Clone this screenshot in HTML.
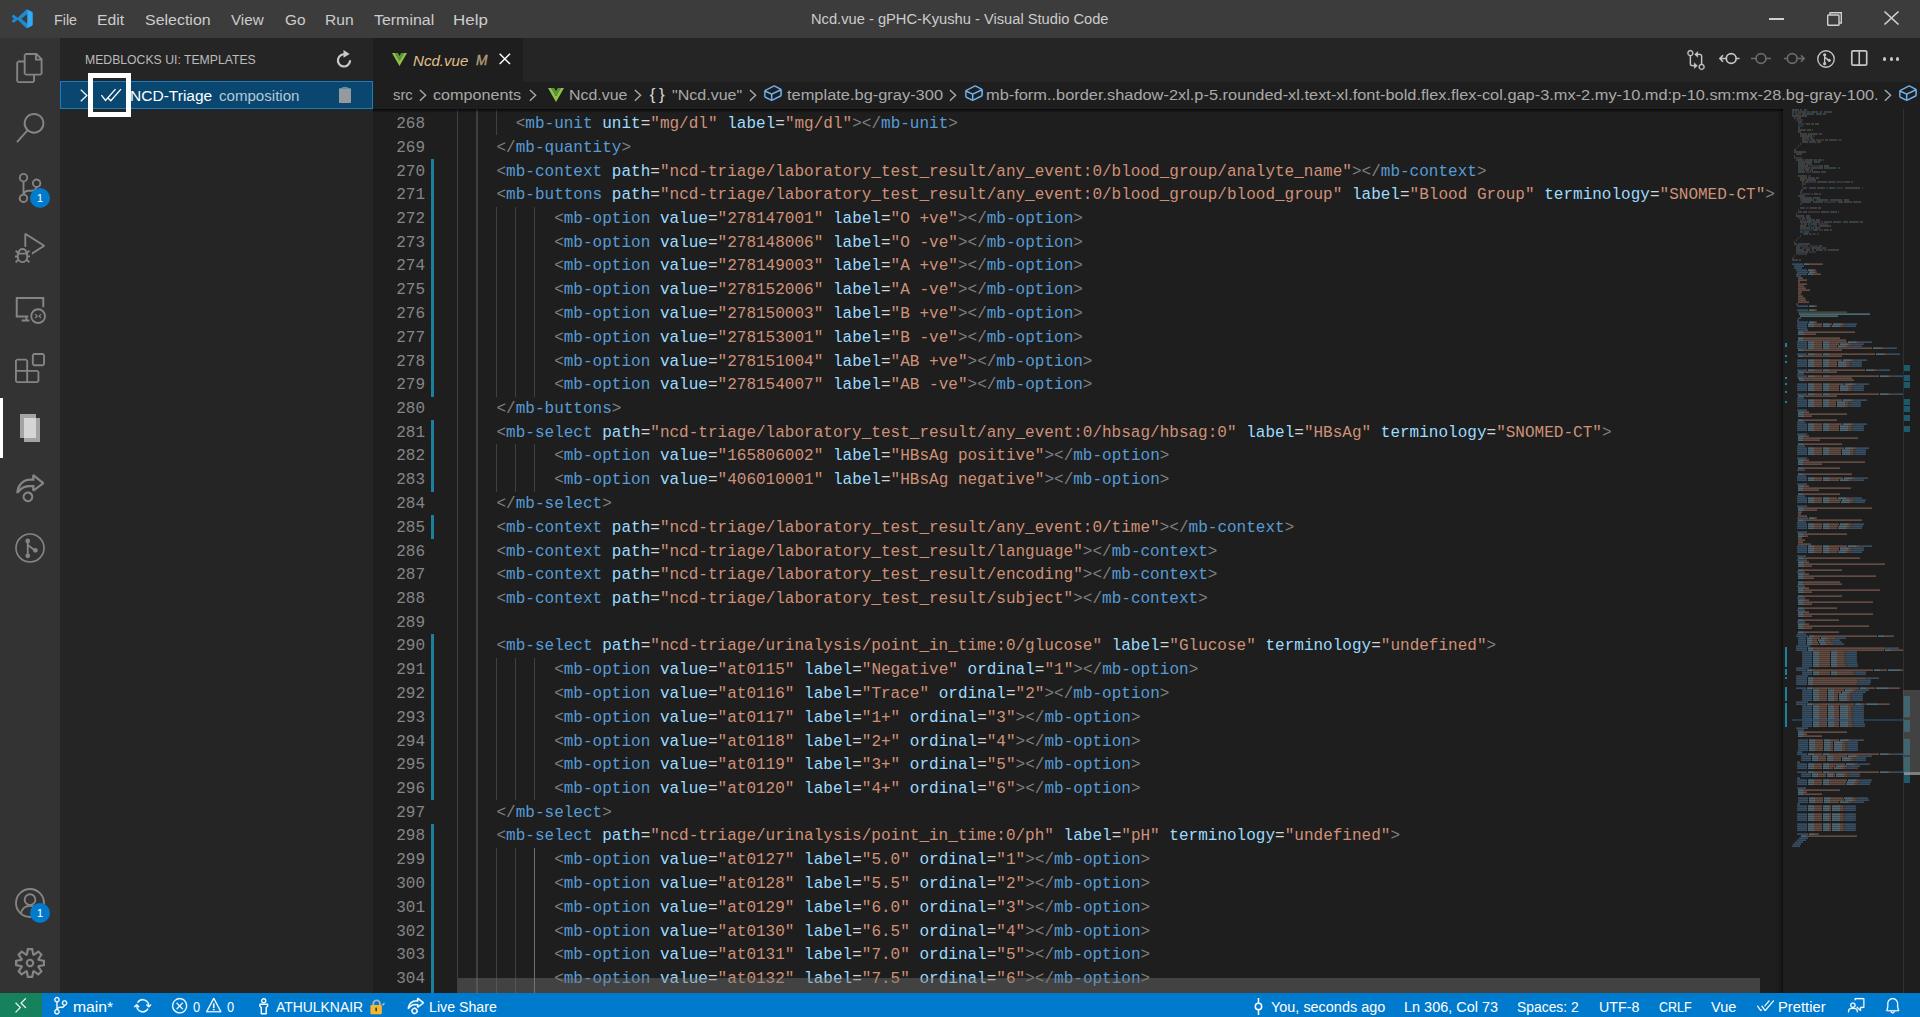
<!DOCTYPE html><html><head><meta charset="utf-8"><title>Ncd.vue - gPHC-Kyushu - Visual Studio Code</title><style>
*{box-sizing:border-box}
html,body{margin:0;padding:0}
html{width:1920px;height:1017px;overflow:hidden}
body{width:1920px;height:1017px;overflow:hidden;background:#1e1e1e;position:relative;font-family:"Liberation Sans",sans-serif;color:#ccc;-webkit-font-smoothing:antialiased}
#title{position:absolute;left:0;top:0;width:1920px;height:38px;background:#3c3c3c}
#act{position:absolute;left:0;top:38px;width:60px;height:955px;background:#333}
#side{position:absolute;left:60px;top:38px;width:313px;height:955px;background:#252526}
#tabs{position:absolute;left:373px;top:38px;width:1547px;height:43.75px;background:#252526}
#tab{position:absolute;left:0;top:0;width:150px;height:43.75px;background:#1e1e1e}
#crumbs{position:absolute;left:373px;top:81.75px;width:1547px;height:27.5px;background:#1e1e1e}
#ed{position:absolute;left:373px;top:109.25px;width:1547px;height:883.25px;background:#1e1e1e;overflow:hidden}
#status{position:absolute;left:0;top:992.5px;width:1920px;height:24.5px;background:#007acc;overflow:hidden}
#remote{position:absolute;left:0;top:0;width:42px;height:24.5px;background:#16825d}
.tx{position:absolute;white-space:pre;line-height:1;transform-origin:0 50%}
.ln,.cl{position:absolute;height:23.75px;line-height:26px;transform:scaleY(1.04);transform-origin:0 17px;font-family:"Liberation Mono",monospace;font-size:16.03px;white-space:pre}
.ln{left:0;width:52px;text-align:right;color:#858585}
.cl{left:85px;color:#d4d4d4}
.p{color:#808080}.t{color:#569cd6}.a{color:#9cdcfe}.s{color:#ce9178}.e{color:#d4d4d4}
.ig{position:absolute;width:1.25px;background:#404040}
.iga{background:#707070}
.gm{position:absolute;left:58px;width:3px;background:#1b809c}
.row{position:absolute;left:0;top:42.5px;width:313px;height:28.75px;background:#094771;outline:1px solid #1f7bbd;outline-offset:-1px}
.box{position:absolute;left:88px;top:73px;width:43px;height:44px;border:5px solid #fff}
svg{position:absolute;overflow:visible}
</style></head><body>
<div id="title"><svg style="left:11.80px;top:8.20px" width="20.60" height="21.60" viewBox="0 0 100 100" preserveAspectRatio="none"><path d="M74.900 7.600 96 17.700c2.400 1.200 4 3.600 4 6.300v52c0 2.700-1.600 5.100-4 6.300L74.900 92.400c-2.600 1.300-5.800.7-7.800-1.300L27.400 54.500 10.200 67.600c-1.600 1.200-3.800 1.100-5.300-.2L.9 63.700c-1.600-1.500-1.600-4 0-5.500L9.900 50 .9 41.800c-1.600-1.500-1.600-4 0-5.500l4-3.700c1.500-1.300 3.700-1.400 5.300-.2l17.200 13.100L67.100 8.900c2-2 5.200-2.600 7.800-1.300zM75 27.300 45 50l30 22.700V27.300z" fill="#1f8ad2"/><path d="M74.900 7.600 96 17.700c2.400 1.200 4 3.600 4 6.300v52c0 2.700-1.600 5.100-4 6.300L74.900 92.400c-1.500.7-3.200.8-4.900.3 2.600-.4 5-2.500 5-5.700V13c0-3.200-2.400-5.300-5-5.700 1.700-.5 3.400-.4 4.900.3z" fill="#35a9f4"/></svg>
<div style="position:absolute;left:1769px;top:18px;width:15px;height:1.6px;background:#d0d0d0"></div>
<svg style="left:1827.00px;top:11.50px" width="15.00" height="14.00" viewBox="0 0 15 14" ><rect x=".700" y="3" width="11.300" height="10.300" rx=".600" fill="none" stroke="#d0d0d0" stroke-width="1.400"/><path d="M3 2.800V.700h11.300v10.300H12.200" fill="none" stroke="#d0d0d0" stroke-width="1.400"/></svg>
<svg style="left:1884.00px;top:11.00px" width="15.00" height="14.00" viewBox="0 0 15 14" ><path d="M.5.500l14 13M14.500.500l-14 13" stroke="#d0d0d0" stroke-width="1.700" fill="none"/></svg></div>
<div id="act"><svg style="left:15.00px;top:15.00px" width="30.00" height="30.00" viewBox="0 0 24 24" ><path d="M17.5 0h-9L7 1.5V6H2.5L1 7.5v15.07L2.5 24h12.07L16 22.57V18h4.7l1.3-1.43V4.5L17.5 0zm0 2.12l2.38 2.38H17.5V2.12zm-3 20.38h-12v-15H7v9.07L8.5 18h6v4.5zm6-6h-12v-15H16V6h4.5v10.5z" fill="#858585" /></svg>
<svg style="left:15.00px;top:75.00px" width="30.00" height="30.00" viewBox="0 0 24 24" ><path d="M15.25 0a8.25 8.25 0 0 0-6.18 13.72L1 22.88l1.12 1 8.05-9.12A8.251 8.251 0 1 0 15.25.01V0zm0 15a6.75 6.75 0 1 1 0-13.5 6.75 6.75 0 0 1 0 13.5z" fill="#858585" /></svg>
<svg style="left:15.00px;top:135.00px" width="30.00" height="30.00" viewBox="0 0 24 24" ><path d="M21.007 8.222A3.738 3.738 0 0 0 15.045 5.2a3.737 3.737 0 0 0 1.156 6.583 2.988 2.988 0 0 1-2.668 1.67h-2.99a4.456 4.456 0 0 0-2.989 1.165V7.4a3.737 3.737 0 1 0-1.494 0v9.117a3.776 3.776 0 1 0 1.816.099 2.99 2.99 0 0 1 2.668-1.667h2.99a4.484 4.484 0 0 0 4.223-3.039 3.736 3.736 0 0 0 3.25-3.687zM4.565 3.738a2.242 2.242 0 1 1 4.484 0 2.242 2.242 0 0 1-4.484 0zm4.484 16.441a2.242 2.242 0 1 1-4.484 0 2.242 2.242 0 0 1 4.484 0zm8.221-9.715a2.242 2.242 0 1 1 0-4.485 2.242 2.242 0 0 1 0 4.485z" fill="#858585" /></svg>
<div style="position:absolute;left:30.0px;top:150.0px;width:20.0px;height:20.0px;border-radius:50%;background:#007acc;color:#fff;font-size:11.5px;text-align:center;line-height:20.0px">1</div>
<svg style="left:15.00px;top:195.00px" width="30.00" height="30.00" viewBox="0 0 24 24" ><path d="M10.94 13.5l-1.32 1.32a3.73 3.73 0 0 0-7.24 0L1.06 13.5 0 14.56l1.72 1.72-.22.22V18H0v1.5h1.5v.08c.077.489.214.966.41 1.42L0 22.94 1.06 24l1.65-1.65A4.308 4.308 0 0 0 6 24a4.31 4.31 0 0 0 3.29-1.65L10.94 24 12 22.94 10.09 21c.198-.464.336-.951.41-1.45v-.1H12V18h-1.500v-1.500l-.220-.220L12 14.560l-1.060-1.060zM6 13.500a2.250 2.250 0 0 1 2.250 2.250h-4.500A2.250 2.250 0 0 1 6 13.500zm3 6a3.330 3.330 0 0 1-3 3 3.330 3.330 0 0 1-3-3v-2.250h6v2.250zm14.760-9.900v1.260L13.500 17.370V15.600l8.500-5.370L9 2v9.460a5.070 5.070 0 0 0-1.500-.720V.630L8.640 0l15.120 9.600z" fill="#858585" /></svg>
<svg style="left:15.00px;top:256.00px" width="30.00" height="30.00" viewBox="0 0 24 24" ><path d="M22.6 10.6V3.1H1.4v14.8h9.2M5.3 21.1h6.2M9.1 18v3" fill="none" stroke="#858585" stroke-width="1.6"/><circle cx="18.5" cy="17.7" r="5.5" fill="#333" stroke="#858585" stroke-width="1.5"/><path d="M16.2 16.2l1.5 1.5-1.5 1.5M20.800 16.200l-1.500 1.500 1.500 1.500" fill="none" stroke="#858585" stroke-width="1"/></svg>
<svg style="left:15.00px;top:315.00px" width="30.00" height="30.00" viewBox="0 0 24 24" ><path d="M13.5 1.5L15 0h7.5L24 1.5V9l-1.500 1.500H15L13.500 9V1.500zm1.500 0V9h7.500V1.500H15zM0 15V6l1.500-1.500H9L10.500 6v7.500H18l1.500 1.500v7.500L18 24H1.500L0 22.500V15zm9-1.500V6H1.500v7.500H9zM9 15H1.500v7.500H9V15zm1.500 7.500H18V15h-7.500v7.500z" fill="#858585" /></svg>
<div style="position:absolute;left:0;top:360px;width:2.5px;height:60px;background:#fff"></div>
<div style="position:absolute;left:20px;top:375.6px;width:16.3px;height:24.4px;background:rgba(255,255,255,.55)"></div>
<div style="position:absolute;left:23.9px;top:379.7px;width:16.2px;height:24.5px;background:rgba(255,255,255,.55)"></div>
<svg style="left:15.00px;top:435.00px" width="30.00" height="30.00" viewBox="0 0 24 24" ><path d="M13.735 1.694L15.178 1l8.029 6.328v1.388l-8.029 6.072-1.443-.694v-2.776h-.59c-4.06-.02-6.71.104-10.61 5.163l-1.534-.493a8.23 8.23 0 0 1 .271-2.255 11.026 11.026 0 0 1 3.92-6.793 11.339 11.339 0 0 1 7.502-2.547h1.040v-2.700zm1.804 7.917v2.776l5.676-4.281-5.648-4.545v2.664h-2.860A9.299 9.299 0 0 0 5.770 8.848a10.444 10.444 0 0 0-2.401 4.122c3.351-3.213 6.190-3.359 9.798-3.359h2.372zm-7.647 5.896a4.310 4.310 0 1 1 4.788 7.166 4.310 4.310 0 0 1-4.788-7.166zm.955 5.728a2.588 2.588 0 1 0 2.878-4.302 2.588 2.588 0 0 0-2.878 4.302z" fill="#858585" /></svg>
<svg style="left:15.00px;top:495.00px" width="30.00" height="30.00" viewBox="0 0 24 24" ><circle cx="12" cy="12" r="11.200" fill="none" stroke="#858585" stroke-width="1.300"/><path d="M10.200 6.500V18M10.200 9.500l5.500 4.300" fill="none" stroke="#858585" stroke-width="1.500"/><circle cx="10.200" cy="6.300" r="1.900" fill="#858585"/><circle cx="10.200" cy="18.200" r="1.900" fill="#858585"/><circle cx="16.300" cy="13.800" r="1.900" fill="#858585"/></svg>
<svg style="left:15.00px;top:850.00px" width="30.00" height="30.00" viewBox="0 0 24 24" ><circle cx="12" cy="12" r="11.200" fill="none" stroke="#858585" stroke-width="1.500"/><circle cx="12" cy="9.300" r="4.300" fill="none" stroke="#858585" stroke-width="1.500"/><path d="M4.800 20.500c.700-4 3.600-6.200 7.200-6.200s6.500 2.200 7.200 6.200" fill="none" stroke="#858585" stroke-width="1.500"/></svg>
<div style="position:absolute;left:30.0px;top:865.0px;width:20.0px;height:20.0px;border-radius:50%;background:#007acc;color:#fff;font-size:11.5px;text-align:center;line-height:20.0px">1</div>
<svg style="left:15.00px;top:910.00px" width="30.00" height="30.00" viewBox="0 0 24 24" ><path d="M19.85 8.75l4.15.83v4.84l-4.15.83 2.35 3.52-3.43 3.43-3.52-2.35-.83 4.15H9.58l-.83-4.15-3.52 2.35-3.43-3.43 2.35-3.52L0 14.42V9.58l4.15-.83L1.8 5.23 5.23 1.8l3.52 2.35L9.58 0h4.84l.83 4.15 3.52-2.35 3.43 3.43-2.35 3.52zm-1.57 5.07l4-.81v-2l-4-.81-.54-1.3 2.290-3.430-1.430-1.430-3.430 2.290-1.300-.540-.810-4h-2l-.810 4-1.300.540-3.430-2.290-1.430 1.430L6.380 8.900l-.540 1.300-4 .810v2l4 .810.540 1.300-2.290 3.430 1.430 1.430 3.430-2.290 1.300.540.810 4h2l.810-4 1.300-.540 3.430 2.290 1.430-1.430-2.290-3.430.540-1.300zm-8.186-4.672A3.430 3.430 0 0 1 12 8.570 3.440 3.440 0 0 1 15.430 12a3.430 3.430 0 1 1-5.336-2.852zm.956 4.274c.281.188.612.288.950.288A1.700 1.700 0 0 0 13.710 12a1.710 1.710 0 1 0-2.660 1.422z" fill="#858585" /></svg></div>
<div id="side"><div class="row"></div><svg style="left:275.50px;top:12.00px" width="16.00" height="19.00" viewBox="0 0 16 19" ><path d="M10.2 4.700A6.100 6.100 0 1 0 14.100 10.300" fill="none" stroke="#c8c8c8" stroke-width="2.200"/><path d="M7.500 0l6.200 3.900-6.200 3.800z" fill="#c8c8c8"/></svg>
<svg style="left:20.30px;top:50.60px" width="8.00" height="13.00" viewBox="0 0 8 13" ><path d="M.800.800l6 5.700-6 5.700" fill="none" stroke="#f0f0f0" stroke-width="1.400"/></svg>
<svg style="left:40.00px;top:50.00px" width="22.00" height="14.00" viewBox="0 0 22 14" ><path d="M1.400 7.200l4.100 5.300L15.500 1.100M8.200 10.200l2.600 2.600L21 1.100" fill="none" stroke="#fff" stroke-width="1.300"/></svg>
<svg style="left:279.00px;top:49.20px" width="12.00" height="16.00" viewBox="0 0 12 16" ><path d="M3.500 0h5v1.300h2.500c.600 0 1 .400 1 1v12.700c0 .600-.400 1-1 1H1c-.600 0-1-.400-1-1V2.300c0-.600.400-1 1-1h2.500z" fill="#959a9e"/><rect x="4" y=".300" width="4" height="1.700" rx=".500" fill="#3f8fd0"/></svg></div>
<div id="tabs"><div id="tab"></div><svg style="left:18.50px;top:14.50px" width="15.00" height="13.12" viewBox="0 0 16 14" ><path d="M0 0h3.300L8 8.200 12.700 0H16L8 14z" fill="#8dc149"/><path d="M3.300 0h2.900L8 3.200 9.800 0h2.900L8 8.200z" fill="#5e9a36"/></svg>
<svg style="left:126.00px;top:15.30px" width="11.70" height="11.70" viewBox="0 0 12 12" ><path d="M.700.700l10.600 10.600M11.300.700L.700 11.300" stroke="#fff" stroke-width="1.500" fill="none"/></svg>
<svg style="left:1313.25px;top:11.50px" width="20.00" height="20.00" viewBox="0 0 16 16" ><path d="M9.500 4H11a1 1 0 0 1 1 1v6.050a2.500 2.500 0 1 0 1 0V5a2 2 0 0 0-2-2H9.500V1L6.750 3.500 9.500 6V4zM12.500 15a1.500 1.500 0 1 1 0-3 1.500 1.500 0 0 1 0 3zM6.500 12H5a1 1 0 0 1-1-1V4.950a2.500 2.500 0 1 0-1 0V11a2 2 0 0 0 2 2h1.500v2l2.750-2.500L6.500 10v2zM3.500 1a1.500 1.500 0 1 1 0 3 1.500 1.500 0 0 1 0-3z" fill="#c5c5c5" fill-rule="evenodd" stroke="#c5c5c5" stroke-width="0.15"/></svg>
<svg style="left:1345.50px;top:14.00px" width="21.00" height="13.00" viewBox="0 0 21 13" ><circle cx="12.200" cy="6.500" r="4.900" fill="none" stroke="#c5c5c5" stroke-width="1.700"/><path d="M17 6.500h3.500M7.300 6.500H1M4 3.300L.900 6.500 4 9.700" fill="none" stroke="#c5c5c5" stroke-width="1.600"/></svg>
<svg style="left:1378.00px;top:14.00px" width="20.00" height="13.00" viewBox="0 0 20 13" ><circle cx="10" cy="6.500" r="4.900" fill="none" stroke="#6b6b6b" stroke-width="1.700"/><path d="M0 6.500h5.100M14.900 6.500H20" fill="none" stroke="#6b6b6b" stroke-width="1.600"/></svg>
<svg style="left:1411.00px;top:14.00px" width="21.00" height="13.00" viewBox="0 0 21 13" ><circle cx="8.200" cy="6.500" r="4.900" fill="none" stroke="#6b6b6b" stroke-width="1.700"/><path d="M0 6.500h3.300M13.100 6.500H20M17 3.300l3.100 3.200L17 9.700" fill="none" stroke="#6b6b6b" stroke-width="1.600"/></svg>
<svg style="left:1444.00px;top:12.00px" width="18.00" height="18.00" viewBox="0 0 24 24" ><circle cx="12" cy="12" r="11" fill="none" stroke="#c5c5c5" stroke-width="1.800"/><path d="M10.200 6.500V18M10.200 9.500l5.500 4.300" fill="none" stroke="#c5c5c5" stroke-width="1.800"/><circle cx="10.200" cy="6.300" r="2.100" fill="#c5c5c5"/><circle cx="10.200" cy="18.200" r="2.100" fill="#c5c5c5"/><circle cx="16.300" cy="13.800" r="2.100" fill="#c5c5c5"/></svg>
<svg style="left:1478.30px;top:12.30px" width="16.50" height="16.00" viewBox="0 0 16.500 16" ><rect x=".800" y=".800" width="14.900" height="14.400" rx="1.200" fill="none" stroke="#c5c5c5" stroke-width="1.700"/><path d="M8.250.700v14.600" stroke="#c5c5c5" stroke-width="1.600"/></svg>
<div style="position:absolute;left:1510.2px;top:19.4px;width:3.2px;height:3.2px;border-radius:50%;background:#c5c5c5"></div>
<div style="position:absolute;left:1516.7px;top:19.4px;width:3.2px;height:3.2px;border-radius:50%;background:#c5c5c5"></div>
<div style="position:absolute;left:1523.3px;top:19.4px;width:3.2px;height:3.2px;border-radius:50%;background:#c5c5c5"></div></div>
<div id="crumbs"><svg style="left:45.60px;top:7.00px" width="8.00" height="12.60" viewBox="0 0 8 12.6" ><path d="M.900.900l5.700 5.400-5.700 5.400" fill="none" stroke="#a9a9a9" stroke-width="1.400"/></svg>
<svg style="left:155.60px;top:7.00px" width="8.00" height="12.60" viewBox="0 0 8 12.6" ><path d="M.900.900l5.700 5.400-5.700 5.400" fill="none" stroke="#a9a9a9" stroke-width="1.400"/></svg>
<svg style="left:260.50px;top:7.00px" width="8.00" height="12.60" viewBox="0 0 8 12.6" ><path d="M.900.900l5.700 5.400-5.700 5.400" fill="none" stroke="#a9a9a9" stroke-width="1.400"/></svg>
<svg style="left:375.50px;top:7.00px" width="8.00" height="12.60" viewBox="0 0 8 12.6" ><path d="M.900.900l5.700 5.400-5.700 5.400" fill="none" stroke="#a9a9a9" stroke-width="1.400"/></svg>
<svg style="left:576.20px;top:7.00px" width="8.00" height="12.60" viewBox="0 0 8 12.6" ><path d="M.900.900l5.700 5.400-5.700 5.400" fill="none" stroke="#a9a9a9" stroke-width="1.400"/></svg>
<svg style="left:1511.00px;top:7.00px" width="8.00" height="12.60" viewBox="0 0 8 12.6" ><path d="M.900.900l5.700 5.400-5.700 5.400" fill="none" stroke="#a9a9a9" stroke-width="1.400"/></svg>
<svg style="left:175.00px;top:6.50px" width="16.00" height="14.00" viewBox="0 0 16 14" ><path d="M0 0h3.300L8 8.200 12.700 0H16L8 14z" fill="#8dc149"/><path d="M3.300 0h2.900L8 3.200 9.800 0h2.900L8 8.200z" fill="#5e9a36"/></svg>
<span class="tx" style="left:276.8px;top:3.800px;font-size:17px;color:#d4d4d4;letter-spacing:3.5px">{}</span>
<svg style="left:389.65px;top:1.45px" width="20.00" height="20.00" viewBox="0 0 16 16" ><path d="M14.45 4.500l-5-2.500h-.900l-7 3.500-.550.890v4.500l.550.900 5 2.500h.900l7-3.500.550-.900v-4.500l-.550-.890zm-8 8.640l-4.500-2.250V7.170l4.500 2v3.970zm.500-4.800L2.290 6.230l6.660-3.340 4.670 2.340-6.670 3.110zm7 1.550l-6.500 3.250V9.210l6.500-3v3.680z" fill="#75beff" stroke="#75beff" stroke-width=".15"/></svg>
<svg style="left:590.75px;top:1.45px" width="20.00" height="20.00" viewBox="0 0 16 16" ><path d="M14.45 4.500l-5-2.500h-.900l-7 3.500-.550.890v4.500l.550.900 5 2.500h.900l7-3.500.550-.900v-4.500l-.550-.890zm-8 8.640l-4.500-2.250V7.170l4.500 2v3.970zm.500-4.800L2.290 6.230l6.660-3.340 4.670 2.340-6.670 3.110zm7 1.550l-6.500 3.250V9.210l6.500-3v3.680z" fill="#75beff" stroke="#75beff" stroke-width=".15"/></svg>
<svg style="left:1525.05px;top:1.45px" width="20.00" height="20.00" viewBox="0 0 16 16" ><path d="M14.45 4.500l-5-2.500h-.900l-7 3.500-.550.890v4.500l.550.900 5 2.500h.900l7-3.500.550-.900v-4.500l-.550-.890zm-8 8.640l-4.500-2.250V7.170l4.500 2v3.970zm.500-4.800L2.290 6.230l6.660-3.340 4.670 2.340-6.670 3.110zm7 1.550l-6.500 3.250V9.210l6.500-3v3.680z" fill="#75beff" stroke="#75beff" stroke-width=".15"/></svg></div>
<div id="ed">
<div class="ig" style="left:84.2px;top:0.00px;height:928.50px"></div>
<div class="ig" style="left:103.4px;top:0.00px;height:928.50px"></div>
<div class="ig" style="left:122.7px;top:0.00px;height:26.00px"></div>
<div class="ig" style="left:122.7px;top:97.25px;height:190.00px"></div>
<div class="ig" style="left:141.9px;top:97.25px;height:190.00px"></div>
<div class="ig" style="left:161.2px;top:97.25px;height:190.00px"></div>
<div class="ig" style="left:122.7px;top:334.75px;height:47.50px"></div>
<div class="ig" style="left:141.9px;top:334.75px;height:47.50px"></div>
<div class="ig" style="left:161.2px;top:334.75px;height:47.50px"></div>
<div class="ig" style="left:122.7px;top:548.50px;height:142.50px"></div>
<div class="ig" style="left:141.9px;top:548.50px;height:142.50px"></div>
<div class="ig" style="left:161.2px;top:548.50px;height:142.50px"></div>
<div class="ig" style="left:122.7px;top:738.50px;height:190.00px"></div>
<div class="ig" style="left:141.9px;top:738.50px;height:190.00px"></div>
<div class="ig iga" style="left:161.2px;top:738.50px;height:190.00px"></div>
<div class="gm" style="top:49.75px;height:237.50px"></div>
<div class="gm" style="top:311.00px;height:71.25px"></div>
<div class="gm" style="top:406.00px;height:23.75px"></div>
<div class="gm" style="top:524.75px;height:166.25px"></div>
<div class="gm" style="top:714.75px;height:213.75px"></div>
<div class="ln" style="top:2.00px">268</div><div class="cl" style="top:2.00px">      <span class="p">&lt;</span><span class="t">mb-unit</span> <span class="a">unit</span><span class="e">=</span><span class="s">"mg/dl"</span> <span class="a">label</span><span class="e">=</span><span class="s">"mg/dl"</span><span class="p">&gt;</span><span class="p">&lt;/</span><span class="t">mb-unit</span><span class="p">&gt;</span></div>
<div class="ln" style="top:26.00px">269</div><div class="cl" style="top:26.00px">    <span class="p">&lt;/</span><span class="t">mb-quantity</span><span class="p">&gt;</span></div>
<div class="ln" style="top:50.00px">270</div><div class="cl" style="top:50.00px">    <span class="p">&lt;</span><span class="t">mb-context</span> <span class="a">path</span><span class="e">=</span><span class="s">"ncd-triage/laboratory_test_result/any_event:0/blood_group/analyte_name"</span><span class="p">&gt;</span><span class="p">&lt;/</span><span class="t">mb-context</span><span class="p">&gt;</span></div>
<div class="ln" style="top:73.00px">271</div><div class="cl" style="top:73.00px">    <span class="p">&lt;</span><span class="t">mb-buttons</span> <span class="a">path</span><span class="e">=</span><span class="s">"ncd-triage/laboratory_test_result/any_event:0/blood_group/blood_group"</span> <span class="a">label</span><span class="e">=</span><span class="s">"Blood Group"</span> <span class="a">terminology</span><span class="e">=</span><span class="s">"SNOMED-CT"</span><span class="p">&gt;</span></div>
<div class="ln" style="top:97.00px">272</div><div class="cl" style="top:97.00px">          <span class="p">&lt;</span><span class="t">mb-option</span> <span class="a">value</span><span class="e">=</span><span class="s">"278147001"</span> <span class="a">label</span><span class="e">=</span><span class="s">"O +ve"</span><span class="p">&gt;</span><span class="p">&lt;/</span><span class="t">mb-option</span><span class="p">&gt;</span></div>
<div class="ln" style="top:121.00px">273</div><div class="cl" style="top:121.00px">          <span class="p">&lt;</span><span class="t">mb-option</span> <span class="a">value</span><span class="e">=</span><span class="s">"278148006"</span> <span class="a">label</span><span class="e">=</span><span class="s">"O -ve"</span><span class="p">&gt;</span><span class="p">&lt;/</span><span class="t">mb-option</span><span class="p">&gt;</span></div>
<div class="ln" style="top:144.00px">274</div><div class="cl" style="top:144.00px">          <span class="p">&lt;</span><span class="t">mb-option</span> <span class="a">value</span><span class="e">=</span><span class="s">"278149003"</span> <span class="a">label</span><span class="e">=</span><span class="s">"A +ve"</span><span class="p">&gt;</span><span class="p">&lt;/</span><span class="t">mb-option</span><span class="p">&gt;</span></div>
<div class="ln" style="top:168.00px">275</div><div class="cl" style="top:168.00px">          <span class="p">&lt;</span><span class="t">mb-option</span> <span class="a">value</span><span class="e">=</span><span class="s">"278152006"</span> <span class="a">label</span><span class="e">=</span><span class="s">"A -ve"</span><span class="p">&gt;</span><span class="p">&lt;/</span><span class="t">mb-option</span><span class="p">&gt;</span></div>
<div class="ln" style="top:192.00px">276</div><div class="cl" style="top:192.00px">          <span class="p">&lt;</span><span class="t">mb-option</span> <span class="a">value</span><span class="e">=</span><span class="s">"278150003"</span> <span class="a">label</span><span class="e">=</span><span class="s">"B +ve"</span><span class="p">&gt;</span><span class="p">&lt;/</span><span class="t">mb-option</span><span class="p">&gt;</span></div>
<div class="ln" style="top:216.00px">277</div><div class="cl" style="top:216.00px">          <span class="p">&lt;</span><span class="t">mb-option</span> <span class="a">value</span><span class="e">=</span><span class="s">"278153001"</span> <span class="a">label</span><span class="e">=</span><span class="s">"B -ve"</span><span class="p">&gt;</span><span class="p">&lt;/</span><span class="t">mb-option</span><span class="p">&gt;</span></div>
<div class="ln" style="top:240.00px">278</div><div class="cl" style="top:240.00px">          <span class="p">&lt;</span><span class="t">mb-option</span> <span class="a">value</span><span class="e">=</span><span class="s">"278151004"</span> <span class="a">label</span><span class="e">=</span><span class="s">"AB +ve"</span><span class="p">&gt;</span><span class="p">&lt;/</span><span class="t">mb-option</span><span class="p">&gt;</span></div>
<div class="ln" style="top:263.00px">279</div><div class="cl" style="top:263.00px">          <span class="p">&lt;</span><span class="t">mb-option</span> <span class="a">value</span><span class="e">=</span><span class="s">"278154007"</span> <span class="a">label</span><span class="e">=</span><span class="s">"AB -ve"</span><span class="p">&gt;</span><span class="p">&lt;/</span><span class="t">mb-option</span><span class="p">&gt;</span></div>
<div class="ln" style="top:287.00px">280</div><div class="cl" style="top:287.00px">    <span class="p">&lt;/</span><span class="t">mb-buttons</span><span class="p">&gt;</span></div>
<div class="ln" style="top:311.00px">281</div><div class="cl" style="top:311.00px">    <span class="p">&lt;</span><span class="t">mb-select</span> <span class="a">path</span><span class="e">=</span><span class="s">"ncd-triage/laboratory_test_result/any_event:0/hbsag/hbsag:0"</span> <span class="a">label</span><span class="e">=</span><span class="s">"HBsAg"</span> <span class="a">terminology</span><span class="e">=</span><span class="s">"SNOMED-CT"</span><span class="p">&gt;</span></div>
<div class="ln" style="top:334.00px">282</div><div class="cl" style="top:334.00px">          <span class="p">&lt;</span><span class="t">mb-option</span> <span class="a">value</span><span class="e">=</span><span class="s">"165806002"</span> <span class="a">label</span><span class="e">=</span><span class="s">"HBsAg positive"</span><span class="p">&gt;</span><span class="p">&lt;/</span><span class="t">mb-option</span><span class="p">&gt;</span></div>
<div class="ln" style="top:358.00px">283</div><div class="cl" style="top:358.00px">          <span class="p">&lt;</span><span class="t">mb-option</span> <span class="a">value</span><span class="e">=</span><span class="s">"406010001"</span> <span class="a">label</span><span class="e">=</span><span class="s">"HBsAg negative"</span><span class="p">&gt;</span><span class="p">&lt;/</span><span class="t">mb-option</span><span class="p">&gt;</span></div>
<div class="ln" style="top:382.00px">284</div><div class="cl" style="top:382.00px">    <span class="p">&lt;/</span><span class="t">mb-select</span><span class="p">&gt;</span></div>
<div class="ln" style="top:406.00px">285</div><div class="cl" style="top:406.00px">    <span class="p">&lt;</span><span class="t">mb-context</span> <span class="a">path</span><span class="e">=</span><span class="s">"ncd-triage/laboratory_test_result/any_event:0/time"</span><span class="p">&gt;</span><span class="p">&lt;/</span><span class="t">mb-context</span><span class="p">&gt;</span></div>
<div class="ln" style="top:430.00px">286</div><div class="cl" style="top:430.00px">    <span class="p">&lt;</span><span class="t">mb-context</span> <span class="a">path</span><span class="e">=</span><span class="s">"ncd-triage/laboratory_test_result/language"</span><span class="p">&gt;</span><span class="p">&lt;/</span><span class="t">mb-context</span><span class="p">&gt;</span></div>
<div class="ln" style="top:453.00px">287</div><div class="cl" style="top:453.00px">    <span class="p">&lt;</span><span class="t">mb-context</span> <span class="a">path</span><span class="e">=</span><span class="s">"ncd-triage/laboratory_test_result/encoding"</span><span class="p">&gt;</span><span class="p">&lt;/</span><span class="t">mb-context</span><span class="p">&gt;</span></div>
<div class="ln" style="top:477.00px">288</div><div class="cl" style="top:477.00px">    <span class="p">&lt;</span><span class="t">mb-context</span> <span class="a">path</span><span class="e">=</span><span class="s">"ncd-triage/laboratory_test_result/subject"</span><span class="p">&gt;</span><span class="p">&lt;/</span><span class="t">mb-context</span><span class="p">&gt;</span></div>
<div class="ln" style="top:501.00px">289</div><div class="cl" style="top:501.00px"></div>
<div class="ln" style="top:524.00px">290</div><div class="cl" style="top:524.00px">    <span class="p">&lt;</span><span class="t">mb-select</span> <span class="a">path</span><span class="e">=</span><span class="s">"ncd-triage/urinalysis/point_in_time:0/glucose"</span> <span class="a">label</span><span class="e">=</span><span class="s">"Glucose"</span> <span class="a">terminology</span><span class="e">=</span><span class="s">"undefined"</span><span class="p">&gt;</span></div>
<div class="ln" style="top:548.00px">291</div><div class="cl" style="top:548.00px">          <span class="p">&lt;</span><span class="t">mb-option</span> <span class="a">value</span><span class="e">=</span><span class="s">"at0115"</span> <span class="a">label</span><span class="e">=</span><span class="s">"Negative"</span> <span class="a">ordinal</span><span class="e">=</span><span class="s">"1"</span><span class="p">&gt;</span><span class="p">&lt;/</span><span class="t">mb-option</span><span class="p">&gt;</span></div>
<div class="ln" style="top:572.00px">292</div><div class="cl" style="top:572.00px">          <span class="p">&lt;</span><span class="t">mb-option</span> <span class="a">value</span><span class="e">=</span><span class="s">"at0116"</span> <span class="a">label</span><span class="e">=</span><span class="s">"Trace"</span> <span class="a">ordinal</span><span class="e">=</span><span class="s">"2"</span><span class="p">&gt;</span><span class="p">&lt;/</span><span class="t">mb-option</span><span class="p">&gt;</span></div>
<div class="ln" style="top:596.00px">293</div><div class="cl" style="top:596.00px">          <span class="p">&lt;</span><span class="t">mb-option</span> <span class="a">value</span><span class="e">=</span><span class="s">"at0117"</span> <span class="a">label</span><span class="e">=</span><span class="s">"1+"</span> <span class="a">ordinal</span><span class="e">=</span><span class="s">"3"</span><span class="p">&gt;</span><span class="p">&lt;/</span><span class="t">mb-option</span><span class="p">&gt;</span></div>
<div class="ln" style="top:620.00px">294</div><div class="cl" style="top:620.00px">          <span class="p">&lt;</span><span class="t">mb-option</span> <span class="a">value</span><span class="e">=</span><span class="s">"at0118"</span> <span class="a">label</span><span class="e">=</span><span class="s">"2+"</span> <span class="a">ordinal</span><span class="e">=</span><span class="s">"4"</span><span class="p">&gt;</span><span class="p">&lt;/</span><span class="t">mb-option</span><span class="p">&gt;</span></div>
<div class="ln" style="top:643.00px">295</div><div class="cl" style="top:643.00px">          <span class="p">&lt;</span><span class="t">mb-option</span> <span class="a">value</span><span class="e">=</span><span class="s">"at0119"</span> <span class="a">label</span><span class="e">=</span><span class="s">"3+"</span> <span class="a">ordinal</span><span class="e">=</span><span class="s">"5"</span><span class="p">&gt;</span><span class="p">&lt;/</span><span class="t">mb-option</span><span class="p">&gt;</span></div>
<div class="ln" style="top:667.00px">296</div><div class="cl" style="top:667.00px">          <span class="p">&lt;</span><span class="t">mb-option</span> <span class="a">value</span><span class="e">=</span><span class="s">"at0120"</span> <span class="a">label</span><span class="e">=</span><span class="s">"4+"</span> <span class="a">ordinal</span><span class="e">=</span><span class="s">"6"</span><span class="p">&gt;</span><span class="p">&lt;/</span><span class="t">mb-option</span><span class="p">&gt;</span></div>
<div class="ln" style="top:691.00px">297</div><div class="cl" style="top:691.00px">    <span class="p">&lt;/</span><span class="t">mb-select</span><span class="p">&gt;</span></div>
<div class="ln" style="top:714.00px">298</div><div class="cl" style="top:714.00px">    <span class="p">&lt;</span><span class="t">mb-select</span> <span class="a">path</span><span class="e">=</span><span class="s">"ncd-triage/urinalysis/point_in_time:0/ph"</span> <span class="a">label</span><span class="e">=</span><span class="s">"pH"</span> <span class="a">terminology</span><span class="e">=</span><span class="s">"undefined"</span><span class="p">&gt;</span></div>
<div class="ln" style="top:738.00px">299</div><div class="cl" style="top:738.00px">          <span class="p">&lt;</span><span class="t">mb-option</span> <span class="a">value</span><span class="e">=</span><span class="s">"at0127"</span> <span class="a">label</span><span class="e">=</span><span class="s">"5.0"</span> <span class="a">ordinal</span><span class="e">=</span><span class="s">"1"</span><span class="p">&gt;</span><span class="p">&lt;/</span><span class="t">mb-option</span><span class="p">&gt;</span></div>
<div class="ln" style="top:762.00px">300</div><div class="cl" style="top:762.00px">          <span class="p">&lt;</span><span class="t">mb-option</span> <span class="a">value</span><span class="e">=</span><span class="s">"at0128"</span> <span class="a">label</span><span class="e">=</span><span class="s">"5.5"</span> <span class="a">ordinal</span><span class="e">=</span><span class="s">"2"</span><span class="p">&gt;</span><span class="p">&lt;/</span><span class="t">mb-option</span><span class="p">&gt;</span></div>
<div class="ln" style="top:786.00px">301</div><div class="cl" style="top:786.00px">          <span class="p">&lt;</span><span class="t">mb-option</span> <span class="a">value</span><span class="e">=</span><span class="s">"at0129"</span> <span class="a">label</span><span class="e">=</span><span class="s">"6.0"</span> <span class="a">ordinal</span><span class="e">=</span><span class="s">"3"</span><span class="p">&gt;</span><span class="p">&lt;/</span><span class="t">mb-option</span><span class="p">&gt;</span></div>
<div class="ln" style="top:810.00px">302</div><div class="cl" style="top:810.00px">          <span class="p">&lt;</span><span class="t">mb-option</span> <span class="a">value</span><span class="e">=</span><span class="s">"at0130"</span> <span class="a">label</span><span class="e">=</span><span class="s">"6.5"</span> <span class="a">ordinal</span><span class="e">=</span><span class="s">"4"</span><span class="p">&gt;</span><span class="p">&lt;/</span><span class="t">mb-option</span><span class="p">&gt;</span></div>
<div class="ln" style="top:833.00px">303</div><div class="cl" style="top:833.00px">          <span class="p">&lt;</span><span class="t">mb-option</span> <span class="a">value</span><span class="e">=</span><span class="s">"at0131"</span> <span class="a">label</span><span class="e">=</span><span class="s">"7.0"</span> <span class="a">ordinal</span><span class="e">=</span><span class="s">"5"</span><span class="p">&gt;</span><span class="p">&lt;/</span><span class="t">mb-option</span><span class="p">&gt;</span></div>
<div class="ln" style="top:857.00px">304</div><div class="cl" style="top:857.00px">          <span class="p">&lt;</span><span class="t">mb-option</span> <span class="a">value</span><span class="e">=</span><span class="s">"at0132"</span> <span class="a">label</span><span class="e">=</span><span class="s">"7.5"</span> <span class="a">ordinal</span><span class="e">=</span><span class="s">"6"</span><span class="p">&gt;</span><span class="p">&lt;/</span><span class="t">mb-option</span><span class="p">&gt;</span></div>
<div class="ln" style="top:881.00px">305</div><div class="cl" style="top:881.00px">          <span class="p">&lt;</span><span class="t">mb-option</span> <span class="a">value</span><span class="e">=</span><span class="s">"at0133"</span> <span class="a">label</span><span class="e">=</span><span class="s">"8.0"</span> <span class="a">ordinal</span><span class="e">=</span><span class="s">"7"</span><span class="p">&gt;</span><span class="p">&lt;/</span><span class="t">mb-option</span><span class="p">&gt;</span></div>
<div style="position:absolute;left:1403px;top:0;width:7px;height:884px;background:linear-gradient(90deg,rgba(0,0,0,0),rgba(0,0,0,.18) 60%,rgba(0,0,0,.55))"></div>
<svg style="left:1418.5px;top:0" width="115" height="884" viewBox="0 0 115 884" opacity=".52">
<path d="M0.0 155h1.0M30.0 155h1.0M2.0 157h1.0M2.0 159h1.0M4.0 161h1.0M23.0 161h1.0M5.0 163h1.0M24.0 163h1.0M4.0 165h1.0M28.0 165h1.0M4.0 167h1.0M4.0 195h1.0M5.0 197h1.0M24.0 197h1.0M5.0 201h1.0M24.0 201h1.0M6.0 209h1.0M5.0 211h1.0M5.0 213h1.0M24.0 213h1.0M5.0 215h1.0M52.0 215h1.0M53.0 215h2.0M64.0 215h1.0M5.0 217h1.0M51.0 217h1.0M52.0 217h2.0M63.0 217h1.0M5.0 219h1.0M6.0 221h1.0M5.0 233h1.0M67.0 233h1.0M68.0 233h2.0M79.0 233h1.0M5.0 235h1.0M59.0 235h1.0M60.0 235h2.0M71.0 235h1.0M5.0 237h1.0M57.0 237h1.0M58.0 237h2.0M69.0 237h1.0M5.0 239h1.0M92.0 239h1.0M93.0 239h2.0M104.0 239h1.0M5.0 245h1.0M95.0 245h1.0M96.0 245h2.0M107.0 245h1.0M5.0 251h1.0M62.0 251h1.0M63.0 251h2.0M74.0 251h1.0M5.0 253h1.0M57.0 253h1.0M58.0 253h2.0M69.0 253h1.0M5.0 255h1.0M57.0 255h1.0M58.0 255h2.0M69.0 255h1.0M5.0 257h1.0M57.0 257h1.0M58.0 257h2.0M69.0 257h1.0M5.0 261h1.0M85.0 261h1.0M86.0 261h2.0M97.0 261h1.0M5.0 265h1.0M5.0 267h1.0M99.0 267h1.0M100.0 267h2.0M111.0 267h0.5M5.0 275h1.0M64.0 275h1.0M65.0 275h2.0M76.0 275h1.0M5.0 277h1.0M59.0 277h1.0M60.0 277h2.0M71.0 277h1.0M5.0 279h1.0M59.0 279h1.0M60.0 279h2.0M71.0 279h1.0M5.0 281h1.0M59.0 281h1.0M60.0 281h2.0M71.0 281h1.0M5.0 285h1.0M99.0 285h1.0M100.0 285h2.0M111.0 285h0.5M5.0 289h1.0M5.0 291h1.0M62.0 291h1.0M63.0 291h2.0M74.0 291h1.0M5.0 293h1.0M56.0 293h1.0M57.0 293h2.0M68.0 293h1.0M5.0 295h1.0M56.0 295h1.0M57.0 295h2.0M68.0 295h1.0M5.0 297h1.0M56.0 297h1.0M57.0 297h2.0M68.0 297h1.0M5.0 301h1.0M5.0 313h1.0M5.0 315h1.0M62.0 315h1.0M63.0 315h2.0M74.0 315h1.0M5.0 317h1.0M59.0 317h1.0M60.0 317h2.0M71.0 317h1.0M5.0 319h1.0M59.0 319h1.0M60.0 319h2.0M71.0 319h1.0M5.0 321h1.0M59.0 321h1.0M60.0 321h2.0M71.0 321h1.0M5.0 325h1.0M5.0 337h1.0M5.0 339h1.0M64.0 339h1.0M65.0 339h2.0M76.0 339h1.0M5.0 341h1.0M61.0 341h1.0M62.0 341h2.0M73.0 341h1.0M5.0 343h1.0M61.0 343h1.0M62.0 343h2.0M73.0 343h1.0M5.0 345h1.0M61.0 345h1.0M62.0 345h2.0M73.0 345h1.0M5.0 349h1.0M5.0 361h1.0M5.0 367h1.0M5.0 369h1.0M63.0 369h1.0M64.0 369h2.0M75.0 369h1.0M5.0 371h1.0M59.0 371h1.0M60.0 371h2.0M71.0 371h1.0M5.0 375h1.0M5.0 387h1.0M5.0 389h1.0M57.0 389h1.0M58.0 389h2.0M69.0 389h1.0M5.0 391h1.0M61.0 391h1.0M62.0 391h2.0M73.0 391h1.0M5.0 393h1.0M60.0 393h1.0M61.0 393h2.0M72.0 393h1.0M5.0 397h1.0M5.0 409h1.0M24.0 409h1.0M5.0 413h1.0M5.0 415h1.0M59.0 415h1.0M60.0 415h2.0M71.0 415h1.0M5.0 417h1.0M58.0 417h1.0M59.0 417h2.0M70.0 417h1.0M5.0 419h1.0M57.0 419h1.0M58.0 419h2.0M69.0 419h1.0M5.0 423h1.0M5.0 437h1.0M67.0 437h1.0M68.0 437h2.0M79.0 437h1.0M5.0 439h1.0M59.0 439h1.0M60.0 439h2.0M71.0 439h1.0M5.0 441h1.0M59.0 441h1.0M60.0 441h2.0M71.0 441h1.0M5.0 443h1.0M57.0 443h1.0M58.0 443h2.0M69.0 443h1.0M5.0 447h1.0M5.0 451h1.0M5.0 463h1.0M5.0 477h1.0M5.0 489h1.0M5.0 501h1.0M5.0 513h1.0M5.0 525h1.0M4.0 527h1.0M101.0 527h1.0M6.0 529h1.0M43.0 529h1.0M44.0 529h2.0M53.0 529h1.0M6.0 531h1.0M37.0 531h1.0M38.0 531h2.0M47.0 531h1.0M6.0 533h1.0M39.0 533h1.0M40.0 533h2.0M49.0 533h1.0M6.0 535h1.0M41.0 535h1.0M42.0 535h2.0M51.0 535h1.0M4.0 537h2.0M17.0 537h1.0M4.0 539h1.0M93.0 539h1.0M94.0 539h2.0M106.0 539h1.0M4.0 541h1.0M111.0 541h0.5M10.0 543h1.0M52.0 543h1.0M53.0 543h2.0M64.0 543h1.0M10.0 545h1.0M52.0 545h1.0M53.0 545h2.0M64.0 545h1.0M10.0 547h1.0M52.0 547h1.0M53.0 547h2.0M64.0 547h1.0M10.0 549h1.0M52.0 549h1.0M53.0 549h2.0M64.0 549h1.0M10.0 551h1.0M52.0 551h1.0M53.0 551h2.0M64.0 551h1.0M10.0 553h1.0M52.0 553h1.0M53.0 553h2.0M64.0 553h1.0M10.0 555h1.0M53.0 555h1.0M54.0 555h2.0M65.0 555h1.0M10.0 557h1.0M53.0 557h1.0M54.0 557h2.0M65.0 557h1.0M4.0 559h2.0M16.0 559h1.0M4.0 561h1.0M111.0 561h0.5M10.0 563h1.0M61.0 563h1.0M62.0 563h2.0M73.0 563h1.0M10.0 565h1.0M61.0 565h1.0M62.0 565h2.0M73.0 565h1.0M4.0 567h2.0M15.0 567h1.0M4.0 569h1.0M73.0 569h1.0M74.0 569h2.0M86.0 569h1.0M4.0 571h1.0M65.0 571h1.0M66.0 571h2.0M78.0 571h1.0M4.0 573h1.0M65.0 573h1.0M66.0 573h2.0M78.0 573h1.0M4.0 575h1.0M64.0 575h1.0M65.0 575h2.0M77.0 575h1.0M4.0 579h1.0M107.0 579h1.0M10.0 581h1.0M64.0 581h1.0M65.0 581h2.0M76.0 581h1.0M10.0 583h1.0M61.0 583h1.0M62.0 583h2.0M73.0 583h1.0M10.0 585h1.0M58.0 585h1.0M59.0 585h2.0M70.0 585h1.0M10.0 587h1.0M58.0 587h1.0M59.0 587h2.0M70.0 587h1.0M10.0 589h1.0M58.0 589h1.0M59.0 589h2.0M70.0 589h1.0M10.0 591h1.0M58.0 591h1.0M59.0 591h2.0M70.0 591h1.0M4.0 593h2.0M15.0 593h1.0M4.0 595h1.0M97.0 595h1.0M10.0 597h1.0M59.0 597h1.0M60.0 597h2.0M71.0 597h1.0M10.0 599h1.0M59.0 599h1.0M60.0 599h2.0M71.0 599h1.0M10.0 601h1.0M59.0 601h1.0M60.0 601h2.0M71.0 601h1.0M10.0 603h1.0M59.0 603h1.0M60.0 603h2.0M71.0 603h1.0M10.0 605h1.0M59.0 605h1.0M60.0 605h2.0M71.0 605h1.0M10.0 607h1.0M59.0 607h1.0M60.0 607h2.0M71.0 607h1.0M10.0 609h1.0M59.0 609h1.0M60.0 609h2.0M71.0 609h1.0M10.0 611h1.0M59.0 611h1.0M60.0 611h2.0M71.0 611h1.0M10.0 613h1.0M59.0 613h1.0M60.0 613h2.0M71.0 613h1.0M10.0 615h1.0M60.0 615h1.0M61.0 615h2.0M72.0 615h1.0M10.0 617h1.0M60.0 617h1.0M61.0 617h2.0M72.0 617h1.0M4.0 619h2.0M15.0 619h1.0M5.0 621h1.0M6.0 631h1.0M59.0 631h1.0M60.0 631h2.0M71.0 631h1.0M6.0 633h1.0M53.0 633h1.0M54.0 633h2.0M65.0 633h1.0M6.0 635h1.0M53.0 635h1.0M54.0 635h2.0M65.0 635h1.0M6.0 637h1.0M53.0 637h1.0M54.0 637h2.0M65.0 637h1.0M6.0 639h1.0M53.0 639h1.0M54.0 639h2.0M65.0 639h1.0M6.0 641h1.0M53.0 641h1.0M54.0 641h2.0M65.0 641h1.0M5.0 643h1.0M5.0 645h1.0M99.0 645h1.0M100.0 645h2.0M111.0 645h0.5M9.0 647h1.0M67.0 647h1.0M68.0 647h2.0M79.0 647h1.0M9.0 649h1.0M61.0 649h1.0M62.0 649h2.0M73.0 649h1.0M9.0 651h1.0M61.0 651h1.0M62.0 651h2.0M73.0 651h1.0M5.0 653h1.0M5.0 655h1.0M65.0 655h1.0M66.0 655h2.0M77.0 655h1.0M5.0 657h1.0M55.0 657h1.0M56.0 657h2.0M67.0 657h1.0M5.0 659h1.0M53.0 659h1.0M54.0 659h2.0M65.0 659h1.0M5.0 663h1.0M99.0 663h1.0M100.0 663h2.0M111.0 663h0.5M9.0 665h1.0M55.0 665h1.0M56.0 665h2.0M67.0 665h1.0M9.0 667h1.0M55.0 667h1.0M56.0 667h2.0M67.0 667h1.0M5.0 669h1.0M5.0 671h1.0M67.0 671h1.0M68.0 671h2.0M79.0 671h1.0M5.0 673h1.0M66.0 673h1.0M67.0 673h2.0M78.0 673h1.0M5.0 675h1.0M65.0 675h1.0M66.0 675h2.0M77.0 675h1.0M5.0 679h1.0M6.0 689h1.0M63.0 689h1.0M64.0 689h2.0M75.0 689h1.0M6.0 691h1.0M64.0 691h1.0M65.0 691h2.0M76.0 691h1.0M6.0 693h1.0M59.0 693h1.0M60.0 693h2.0M71.0 693h1.0M5.0 695h1.0M5.0 697h1.0M51.0 697h1.0M52.0 697h2.0M63.0 697h1.0M5.0 699h1.0M51.0 699h1.0M52.0 699h2.0M63.0 699h1.0M5.0 701h1.0M51.0 701h1.0M52.0 701h2.0M63.0 701h1.0M5.0 705h1.0M51.0 705h1.0M52.0 705h2.0M63.0 705h1.0M5.0 707h1.0M51.0 707h1.0M52.0 707h2.0M63.0 707h1.0M5.0 709h1.0M51.0 709h1.0M52.0 709h2.0M63.0 709h1.0M5.0 711h1.0M51.0 711h1.0M52.0 711h2.0M63.0 711h1.0M5.0 715h1.0M51.0 715h1.0M52.0 715h2.0M63.0 715h1.0M5.0 717h1.0M51.0 717h1.0M52.0 717h2.0M63.0 717h1.0M5.0 719h1.0M51.0 719h1.0M52.0 719h2.0M63.0 719h1.0M5.0 721h1.0M51.0 721h1.0M52.0 721h2.0M63.0 721h1.0M5.0 725h1.0M26.0 725h1.0M7.0 729h1.0M5.0 731h1.0M3.0 733h1.0M1.0 735h1.0M0.0 737h1.0" stroke="#808080" stroke-width="1.25" fill="none"/>
<path d="M1.0 155h10.0M3.0 157h9.0M3.0 159h7.0M5.0 161h10.0M6.0 163h10.0M5.0 165h10.0M5.0 167h4.0M5.0 195h1.0M6.0 197h10.0M6.0 201h10.0M7.0 209h2.0M6.0 211h1.0M6.0 213h10.0M6.0 215h9.0M55.0 215h9.0M6.0 217h9.0M54.0 217h9.0M6.0 219h9.0M7.0 221h9.0M6.0 233h9.0M70.0 233h9.0M6.0 235h9.0M62.0 235h9.0M6.0 237h9.0M60.0 237h9.0M6.0 239h9.0M95.0 239h9.0M6.0 245h9.0M98.0 245h9.0M6.0 251h9.0M65.0 251h9.0M6.0 253h9.0M60.0 253h9.0M6.0 255h9.0M60.0 255h9.0M6.0 257h9.0M60.0 257h9.0M6.0 261h9.0M88.0 261h9.0M6.0 265h6.0M6.0 267h9.0M102.0 267h9.0M6.0 275h9.0M67.0 275h9.0M6.0 277h9.0M62.0 277h9.0M6.0 279h9.0M62.0 279h9.0M6.0 281h9.0M62.0 281h9.0M6.0 285h9.0M102.0 285h9.0M6.0 289h6.0M6.0 291h9.0M65.0 291h9.0M6.0 293h9.0M59.0 293h9.0M6.0 295h9.0M59.0 295h9.0M6.0 297h9.0M59.0 297h9.0M6.0 301h9.0M6.0 313h7.0M6.0 315h9.0M65.0 315h9.0M6.0 317h9.0M62.0 317h9.0M6.0 319h9.0M62.0 319h9.0M6.0 321h9.0M62.0 321h9.0M6.0 325h9.0M6.0 337h7.0M6.0 339h9.0M67.0 339h9.0M6.0 341h9.0M64.0 341h9.0M6.0 343h9.0M64.0 343h9.0M6.0 345h9.0M64.0 345h9.0M6.0 349h9.0M6.0 361h7.0M6.0 367h8.0M6.0 369h9.0M66.0 369h9.0M6.0 371h9.0M62.0 371h9.0M6.0 375h9.0M6.0 387h7.0M6.0 389h9.0M60.0 389h9.0M6.0 391h9.0M64.0 391h9.0M6.0 393h9.0M63.0 393h9.0M6.0 397h9.0M6.0 409h10.0M6.0 413h8.0M6.0 415h9.0M62.0 415h9.0M6.0 417h9.0M61.0 417h9.0M6.0 419h9.0M60.0 419h9.0M6.0 423h9.0M6.0 437h9.0M70.0 437h9.0M6.0 439h9.0M62.0 439h9.0M6.0 441h9.0M62.0 441h9.0M6.0 443h9.0M60.0 443h9.0M6.0 447h8.0M6.0 451h9.0M6.0 463h7.0M6.0 477h7.0M6.0 489h7.0M6.0 501h7.0M6.0 513h7.0M6.0 525h8.0M5.0 527h11.0M7.0 529h7.0M46.0 529h7.0M7.0 531h7.0M40.0 531h7.0M7.0 533h7.0M42.0 533h7.0M7.0 535h7.0M44.0 535h7.0M6.0 537h11.0M5.0 539h10.0M96.0 539h10.0M5.0 541h10.0M11.0 543h9.0M55.0 543h9.0M11.0 545h9.0M55.0 545h9.0M11.0 547h9.0M55.0 547h9.0M11.0 549h9.0M55.0 549h9.0M11.0 551h9.0M55.0 551h9.0M11.0 553h9.0M55.0 553h9.0M11.0 555h9.0M56.0 555h9.0M11.0 557h9.0M56.0 557h9.0M6.0 559h10.0M5.0 561h9.0M11.0 563h9.0M64.0 563h9.0M11.0 565h9.0M64.0 565h9.0M6.0 567h9.0M5.0 569h10.0M76.0 569h10.0M5.0 571h10.0M68.0 571h10.0M5.0 573h10.0M68.0 573h10.0M5.0 575h10.0M67.0 575h10.0M5.0 579h9.0M11.0 581h9.0M67.0 581h9.0M11.0 583h9.0M64.0 583h9.0M11.0 585h9.0M61.0 585h9.0M11.0 587h9.0M61.0 587h9.0M11.0 589h9.0M61.0 589h9.0M11.0 591h9.0M61.0 591h9.0M6.0 593h9.0M5.0 595h9.0M11.0 597h9.0M62.0 597h9.0M11.0 599h9.0M62.0 599h9.0M11.0 601h9.0M62.0 601h9.0M11.0 603h9.0M62.0 603h9.0M11.0 605h9.0M62.0 605h9.0M11.0 607h9.0M62.0 607h9.0M11.0 609h9.0M62.0 609h9.0M11.0 611h9.0M62.0 611h9.0M11.0 613h9.0M62.0 613h9.0M11.0 615h9.0M63.0 615h9.0M11.0 617h9.0M63.0 617h9.0M6.0 619h9.0M6.0 621h6.0M7.0 631h9.0M62.0 631h9.0M7.0 633h9.0M56.0 633h9.0M7.0 635h9.0M56.0 635h9.0M7.0 637h9.0M56.0 637h9.0M7.0 639h9.0M56.0 639h9.0M7.0 641h9.0M56.0 641h9.0M6.0 643h4.0M6.0 645h9.0M102.0 645h9.0M10.0 647h9.0M70.0 647h9.0M10.0 649h9.0M64.0 649h9.0M10.0 651h9.0M64.0 651h9.0M6.0 653h2.0M6.0 655h9.0M68.0 655h9.0M6.0 657h9.0M58.0 657h9.0M6.0 659h9.0M56.0 659h9.0M6.0 663h9.0M102.0 663h9.0M10.0 665h9.0M58.0 665h9.0M10.0 667h9.0M58.0 667h9.0M6.0 669h2.0M6.0 671h9.0M70.0 671h9.0M6.0 673h9.0M69.0 673h9.0M6.0 675h9.0M68.0 675h9.0M6.0 679h8.0M7.0 689h9.0M66.0 689h9.0M7.0 691h9.0M67.0 691h9.0M7.0 693h9.0M62.0 693h9.0M6.0 695h2.0M6.0 697h9.0M54.0 697h9.0M6.0 699h9.0M54.0 699h9.0M6.0 701h9.0M54.0 701h9.0M6.0 705h9.0M54.0 705h9.0M6.0 707h9.0M54.0 707h9.0M6.0 709h9.0M54.0 709h9.0M6.0 711h9.0M54.0 711h9.0M6.0 715h9.0M54.0 715h9.0M6.0 717h9.0M54.0 717h9.0M6.0 719h9.0M54.0 719h9.0M6.0 721h9.0M54.0 721h9.0M6.0 725h10.0M8.0 729h8.0M6.0 731h8.0M4.0 733h7.0M2.0 735h7.0M1.0 737h7.0" stroke="#569cd6" stroke-width="1.25" fill="none"/>
<path d="M12.0 155h4.0M16.0 161h4.0M17.0 163h4.0M16.0 165h4.0M17.0 197h4.0M17.0 201h4.0M7.0 205h71.0M8.0 207h38.0M17.0 213h4.0M16.0 215h5.0M31.0 215h5.0M41.0 215h7.0M16.0 217h5.0M31.0 217h5.0M40.0 217h7.0M6.0 223h4.0M6.0 225h5.0M6.0 229h4.0M6.0 231h4.0M16.0 233h5.0M31.0 233h5.0M56.0 233h7.0M16.0 235h5.0M31.0 235h5.0M48.0 235h7.0M16.0 237h5.0M31.0 237h5.0M46.0 237h7.0M16.0 239h5.0M31.0 239h5.0M81.0 239h7.0M6.0 241h4.0M16.0 245h5.0M31.0 245h5.0M84.0 245h7.0M6.0 247h4.0M16.0 251h5.0M31.0 251h5.0M51.0 251h7.0M16.0 253h5.0M31.0 253h5.0M46.0 253h7.0M16.0 255h5.0M31.0 255h5.0M46.0 255h7.0M16.0 257h5.0M31.0 257h5.0M46.0 257h7.0M16.0 261h5.0M31.0 261h5.0M74.0 261h7.0M6.0 263h4.0M16.0 267h5.0M31.0 267h5.0M88.0 267h7.0M6.0 269h4.0M7.0 271h4.0M16.0 275h5.0M31.0 275h5.0M53.0 275h7.0M16.0 277h5.0M31.0 277h5.0M48.0 277h7.0M16.0 279h5.0M31.0 279h5.0M48.0 279h7.0M16.0 281h5.0M31.0 281h5.0M48.0 281h7.0M16.0 285h5.0M31.0 285h5.0M88.0 285h7.0M6.0 287h4.0M16.0 291h5.0M31.0 291h5.0M51.0 291h7.0M16.0 293h5.0M31.0 293h5.0M45.0 293h7.0M16.0 295h5.0M31.0 295h5.0M45.0 295h7.0M16.0 297h5.0M31.0 297h5.0M45.0 297h7.0M6.0 303h5.0M6.0 305h4.0M6.0 307h5.0M6.0 311h4.0M16.0 315h5.0M31.0 315h5.0M51.0 315h7.0M16.0 317h5.0M31.0 317h5.0M48.0 317h7.0M16.0 319h5.0M31.0 319h5.0M48.0 319h7.0M16.0 321h5.0M31.0 321h5.0M48.0 321h7.0M6.0 327h5.0M6.0 329h4.0M6.0 331h4.0M6.0 335h4.0M16.0 339h5.0M31.0 339h5.0M53.0 339h7.0M16.0 341h5.0M31.0 341h5.0M50.0 341h7.0M16.0 343h5.0M31.0 343h5.0M50.0 343h7.0M16.0 345h5.0M31.0 345h5.0M50.0 345h7.0M6.0 351h5.0M6.0 353h4.0M6.0 355h4.0M6.0 359h4.0M6.0 365h4.0M16.0 369h5.0M31.0 369h5.0M52.0 369h7.0M16.0 371h5.0M31.0 371h5.0M48.0 371h7.0M6.0 377h5.0M6.0 379h4.0M6.0 381h4.0M6.0 385h4.0M16.0 389h5.0M31.0 389h5.0M46.0 389h7.0M16.0 391h5.0M31.0 391h5.0M50.0 391h7.0M16.0 393h5.0M31.0 393h5.0M49.0 393h7.0M6.0 399h4.0M6.0 401h5.0M17.0 409h4.0M6.0 411h4.0M16.0 415h5.0M31.0 415h5.0M48.0 415h7.0M16.0 417h5.0M31.0 417h5.0M47.0 417h7.0M16.0 419h5.0M31.0 419h5.0M46.0 419h7.0M6.0 425h4.0M6.0 427h5.0M16.0 437h5.0M31.0 437h5.0M56.0 437h7.0M16.0 439h5.0M31.0 439h5.0M48.0 439h7.0M16.0 441h5.0M31.0 441h5.0M48.0 441h7.0M16.0 443h5.0M31.0 443h5.0M46.0 443h7.0M6.0 449h4.0M6.0 453h5.0M6.0 455h4.0M6.0 457h5.0M6.0 461h4.0M6.0 465h5.0M6.0 467h4.0M6.0 469h5.0M6.0 473h4.0M6.0 475h4.0M6.0 479h5.0M6.0 481h4.0M6.0 483h5.0M6.0 487h4.0M6.0 491h5.0M6.0 493h4.0M6.0 495h5.0M6.0 499h4.0M6.0 503h5.0M6.0 505h4.0M6.0 507h5.0M6.0 511h4.0M6.0 515h5.0M6.0 517h4.0M6.0 519h5.0M6.0 523h4.0M17.0 527h4.0M86.0 527h5.0M15.0 529h4.0M29.0 529h5.0M15.0 531h4.0M26.0 531h5.0M15.0 533h4.0M27.0 533h5.0M15.0 535h4.0M28.0 535h5.0M16.0 539h4.0M16.0 541h4.0M93.0 541h5.0M111.0 541h0.5M21.0 543h5.0M39.0 543h5.0M21.0 545h5.0M39.0 545h5.0M21.0 547h5.0M39.0 547h5.0M21.0 549h5.0M39.0 549h5.0M21.0 551h5.0M39.0 551h5.0M21.0 553h5.0M39.0 553h5.0M21.0 555h5.0M39.0 555h5.0M21.0 557h5.0M39.0 557h5.0M15.0 561h4.0M82.0 561h5.0M96.0 561h11.0M21.0 563h5.0M39.0 563h5.0M21.0 565h5.0M39.0 565h5.0M16.0 569h4.0M16.0 571h4.0M16.0 573h4.0M16.0 575h4.0M15.0 579h4.0M68.0 579h5.0M84.0 579h11.0M21.0 581h5.0M36.0 581h5.0M53.0 581h7.0M21.0 583h5.0M36.0 583h5.0M50.0 583h7.0M21.0 585h5.0M36.0 585h5.0M47.0 585h7.0M21.0 587h5.0M36.0 587h5.0M47.0 587h7.0M21.0 589h5.0M36.0 589h5.0M47.0 589h7.0M21.0 591h5.0M36.0 591h5.0M47.0 591h7.0M15.0 595h4.0M63.0 595h5.0M74.0 595h11.0M21.0 597h5.0M36.0 597h5.0M48.0 597h7.0M21.0 599h5.0M36.0 599h5.0M48.0 599h7.0M21.0 601h5.0M36.0 601h5.0M48.0 601h7.0M21.0 603h5.0M36.0 603h5.0M48.0 603h7.0M21.0 605h5.0M36.0 605h5.0M48.0 605h7.0M21.0 607h5.0M36.0 607h5.0M48.0 607h7.0M21.0 609h5.0M36.0 609h5.0M48.0 609h7.0M21.0 611h5.0M36.0 611h5.0M48.0 611h7.0M21.0 613h5.0M36.0 613h5.0M48.0 613h7.0M21.0 615h5.0M36.0 615h5.0M48.0 615h7.0M21.0 617h5.0M36.0 617h5.0M48.0 617h7.0M6.0 623h4.0M6.0 625h5.0M6.0 627h4.0M17.0 631h5.0M32.0 631h5.0M48.0 631h7.0M17.0 633h5.0M32.0 633h5.0M42.0 633h7.0M17.0 635h5.0M32.0 635h5.0M42.0 635h7.0M17.0 637h5.0M32.0 637h5.0M42.0 637h7.0M17.0 639h5.0M32.0 639h5.0M42.0 639h7.0M17.0 641h5.0M32.0 641h5.0M42.0 641h7.0M16.0 645h5.0M31.0 645h5.0M88.0 645h7.0M20.0 647h5.0M35.0 647h5.0M56.0 647h7.0M20.0 649h5.0M35.0 649h5.0M50.0 649h7.0M20.0 651h5.0M35.0 651h5.0M50.0 651h7.0M16.0 655h5.0M31.0 655h5.0M54.0 655h7.0M16.0 657h5.0M31.0 657h5.0M44.0 657h7.0M16.0 659h5.0M31.0 659h5.0M42.0 659h7.0M16.0 663h5.0M31.0 663h5.0M88.0 663h7.0M20.0 665h5.0M35.0 665h5.0M44.0 665h7.0M20.0 667h5.0M35.0 667h5.0M44.0 667h7.0M16.0 671h5.0M31.0 671h5.0M56.0 671h7.0M16.0 673h5.0M31.0 673h5.0M55.0 673h7.0M16.0 675h5.0M31.0 675h5.0M54.0 675h7.0M6.0 681h4.0M6.0 683h5.0M6.0 685h4.0M17.0 689h5.0M32.0 689h5.0M52.0 689h7.0M17.0 691h5.0M32.0 691h5.0M53.0 691h7.0M17.0 693h5.0M32.0 693h5.0M48.0 693h7.0M16.0 697h5.0M31.0 697h5.0M40.0 697h7.0M16.0 699h5.0M31.0 699h5.0M40.0 699h7.0M16.0 701h5.0M31.0 701h5.0M40.0 701h7.0M16.0 705h5.0M31.0 705h5.0M40.0 705h7.0M16.0 707h5.0M31.0 707h5.0M40.0 707h7.0M16.0 709h5.0M31.0 709h5.0M40.0 709h7.0M16.0 711h5.0M31.0 711h5.0M40.0 711h7.0M16.0 715h5.0M31.0 715h5.0M40.0 715h7.0M16.0 717h5.0M31.0 717h5.0M40.0 717h7.0M16.0 719h5.0M31.0 719h5.0M40.0 719h7.0M16.0 721h5.0M31.0 721h5.0M40.0 721h7.0M17.0 725h4.0M9.0 727h4.0" stroke="#9cdcfe" stroke-width="1.25" fill="none"/>
<path d="M16.0 155h1.0M20.0 161h1.0M21.0 163h1.0M20.0 165h1.0M21.0 197h1.0M21.0 201h1.0M21.0 213h1.0M21.0 215h1.0M36.0 215h1.0M48.0 215h1.0M21.0 217h1.0M36.0 217h1.0M47.0 217h1.0M10.0 223h1.0M11.0 225h1.0M10.0 229h1.0M10.0 231h1.0M21.0 233h1.0M36.0 233h1.0M63.0 233h1.0M21.0 235h1.0M36.0 235h1.0M55.0 235h1.0M21.0 237h1.0M36.0 237h1.0M53.0 237h1.0M21.0 239h1.0M36.0 239h1.0M88.0 239h1.0M10.0 241h1.0M21.0 245h1.0M36.0 245h1.0M91.0 245h1.0M10.0 247h1.0M21.0 251h1.0M36.0 251h1.0M58.0 251h1.0M21.0 253h1.0M36.0 253h1.0M53.0 253h1.0M21.0 255h1.0M36.0 255h1.0M53.0 255h1.0M21.0 257h1.0M36.0 257h1.0M53.0 257h1.0M21.0 261h1.0M36.0 261h1.0M81.0 261h1.0M10.0 263h1.0M21.0 267h1.0M36.0 267h1.0M95.0 267h1.0M10.0 269h1.0M11.0 271h1.0M21.0 275h1.0M36.0 275h1.0M60.0 275h1.0M21.0 277h1.0M36.0 277h1.0M55.0 277h1.0M21.0 279h1.0M36.0 279h1.0M55.0 279h1.0M21.0 281h1.0M36.0 281h1.0M55.0 281h1.0M21.0 285h1.0M36.0 285h1.0M95.0 285h1.0M10.0 287h1.0M21.0 291h1.0M36.0 291h1.0M58.0 291h1.0M21.0 293h1.0M36.0 293h1.0M52.0 293h1.0M21.0 295h1.0M36.0 295h1.0M52.0 295h1.0M21.0 297h1.0M36.0 297h1.0M52.0 297h1.0M11.0 303h1.0M10.0 305h1.0M11.0 307h1.0M10.0 311h1.0M21.0 315h1.0M36.0 315h1.0M58.0 315h1.0M21.0 317h1.0M36.0 317h1.0M55.0 317h1.0M21.0 319h1.0M36.0 319h1.0M55.0 319h1.0M21.0 321h1.0M36.0 321h1.0M55.0 321h1.0M11.0 327h1.0M10.0 329h1.0M10.0 331h1.0M10.0 335h1.0M21.0 339h1.0M36.0 339h1.0M60.0 339h1.0M21.0 341h1.0M36.0 341h1.0M57.0 341h1.0M21.0 343h1.0M36.0 343h1.0M57.0 343h1.0M21.0 345h1.0M36.0 345h1.0M57.0 345h1.0M11.0 351h1.0M10.0 353h1.0M10.0 355h1.0M10.0 359h1.0M10.0 365h1.0M21.0 369h1.0M36.0 369h1.0M59.0 369h1.0M21.0 371h1.0M36.0 371h1.0M55.0 371h1.0M11.0 377h1.0M10.0 379h1.0M10.0 381h1.0M10.0 385h1.0M21.0 389h1.0M36.0 389h1.0M53.0 389h1.0M21.0 391h1.0M36.0 391h1.0M57.0 391h1.0M21.0 393h1.0M36.0 393h1.0M56.0 393h1.0M10.0 399h1.0M11.0 401h1.0M21.0 409h1.0M10.0 411h1.0M21.0 415h1.0M36.0 415h1.0M55.0 415h1.0M21.0 417h1.0M36.0 417h1.0M54.0 417h1.0M21.0 419h1.0M36.0 419h1.0M53.0 419h1.0M10.0 425h1.0M11.0 427h1.0M21.0 437h1.0M36.0 437h1.0M63.0 437h1.0M21.0 439h1.0M36.0 439h1.0M55.0 439h1.0M21.0 441h1.0M36.0 441h1.0M55.0 441h1.0M21.0 443h1.0M36.0 443h1.0M53.0 443h1.0M10.0 449h1.0M11.0 453h1.0M10.0 455h1.0M11.0 457h1.0M10.0 461h1.0M11.0 465h1.0M10.0 467h1.0M11.0 469h1.0M10.0 473h1.0M10.0 475h1.0M11.0 479h1.0M10.0 481h1.0M11.0 483h1.0M10.0 487h1.0M11.0 491h1.0M10.0 493h1.0M11.0 495h1.0M10.0 499h1.0M11.0 503h1.0M10.0 505h1.0M11.0 507h1.0M10.0 511h1.0M11.0 515h1.0M10.0 517h1.0M11.0 519h1.0M10.0 523h1.0M21.0 527h1.0M91.0 527h1.0M19.0 529h1.0M34.0 529h1.0M19.0 531h1.0M31.0 531h1.0M19.0 533h1.0M32.0 533h1.0M19.0 535h1.0M33.0 535h1.0M20.0 539h1.0M20.0 541h1.0M98.0 541h1.0M111.0 541h0.5M26.0 543h1.0M44.0 543h1.0M26.0 545h1.0M44.0 545h1.0M26.0 547h1.0M44.0 547h1.0M26.0 549h1.0M44.0 549h1.0M26.0 551h1.0M44.0 551h1.0M26.0 553h1.0M44.0 553h1.0M26.0 555h1.0M44.0 555h1.0M26.0 557h1.0M44.0 557h1.0M19.0 561h1.0M87.0 561h1.0M107.0 561h1.0M26.0 563h1.0M44.0 563h1.0M26.0 565h1.0M44.0 565h1.0M20.0 569h1.0M20.0 571h1.0M20.0 573h1.0M20.0 575h1.0M19.0 579h1.0M73.0 579h1.0M95.0 579h1.0M26.0 581h1.0M41.0 581h1.0M60.0 581h1.0M26.0 583h1.0M41.0 583h1.0M57.0 583h1.0M26.0 585h1.0M41.0 585h1.0M54.0 585h1.0M26.0 587h1.0M41.0 587h1.0M54.0 587h1.0M26.0 589h1.0M41.0 589h1.0M54.0 589h1.0M26.0 591h1.0M41.0 591h1.0M54.0 591h1.0M19.0 595h1.0M68.0 595h1.0M85.0 595h1.0M26.0 597h1.0M41.0 597h1.0M55.0 597h1.0M26.0 599h1.0M41.0 599h1.0M55.0 599h1.0M26.0 601h1.0M41.0 601h1.0M55.0 601h1.0M26.0 603h1.0M41.0 603h1.0M55.0 603h1.0M26.0 605h1.0M41.0 605h1.0M55.0 605h1.0M26.0 607h1.0M41.0 607h1.0M55.0 607h1.0M26.0 609h1.0M41.0 609h1.0M55.0 609h1.0M26.0 611h1.0M41.0 611h1.0M55.0 611h1.0M26.0 613h1.0M41.0 613h1.0M55.0 613h1.0M26.0 615h1.0M41.0 615h1.0M55.0 615h1.0M26.0 617h1.0M41.0 617h1.0M55.0 617h1.0M10.0 623h1.0M11.0 625h1.0M10.0 627h1.0M22.0 631h1.0M37.0 631h1.0M55.0 631h1.0M22.0 633h1.0M37.0 633h1.0M49.0 633h1.0M22.0 635h1.0M37.0 635h1.0M49.0 635h1.0M22.0 637h1.0M37.0 637h1.0M49.0 637h1.0M22.0 639h1.0M37.0 639h1.0M49.0 639h1.0M22.0 641h1.0M37.0 641h1.0M49.0 641h1.0M21.0 645h1.0M36.0 645h1.0M95.0 645h1.0M25.0 647h1.0M40.0 647h1.0M63.0 647h1.0M25.0 649h1.0M40.0 649h1.0M57.0 649h1.0M25.0 651h1.0M40.0 651h1.0M57.0 651h1.0M21.0 655h1.0M36.0 655h1.0M61.0 655h1.0M21.0 657h1.0M36.0 657h1.0M51.0 657h1.0M21.0 659h1.0M36.0 659h1.0M49.0 659h1.0M21.0 663h1.0M36.0 663h1.0M95.0 663h1.0M25.0 665h1.0M40.0 665h1.0M51.0 665h1.0M25.0 667h1.0M40.0 667h1.0M51.0 667h1.0M21.0 671h1.0M36.0 671h1.0M63.0 671h1.0M21.0 673h1.0M36.0 673h1.0M62.0 673h1.0M21.0 675h1.0M36.0 675h1.0M61.0 675h1.0M10.0 681h1.0M11.0 683h1.0M10.0 685h1.0M22.0 689h1.0M37.0 689h1.0M59.0 689h1.0M22.0 691h1.0M37.0 691h1.0M60.0 691h1.0M22.0 693h1.0M37.0 693h1.0M55.0 693h1.0M21.0 697h1.0M36.0 697h1.0M47.0 697h1.0M21.0 699h1.0M36.0 699h1.0M47.0 699h1.0M21.0 701h1.0M36.0 701h1.0M47.0 701h1.0M21.0 705h1.0M36.0 705h1.0M47.0 705h1.0M21.0 707h1.0M36.0 707h1.0M47.0 707h1.0M21.0 709h1.0M36.0 709h1.0M47.0 709h1.0M21.0 711h1.0M36.0 711h1.0M47.0 711h1.0M21.0 715h1.0M36.0 715h1.0M47.0 715h1.0M21.0 717h1.0M36.0 717h1.0M47.0 717h1.0M21.0 719h1.0M36.0 719h1.0M47.0 719h1.0M21.0 721h1.0M36.0 721h1.0M47.0 721h1.0M21.0 725h1.0M13.0 727h1.0" stroke="#d4d4d4" stroke-width="1.25" fill="none"/>
<path d="M17.0 155h13.0M21.0 161h2.0M22.0 163h2.0M21.0 165h7.0M6.0 169h5.0M6.0 171h9.0M6.0 173h2.0M6.0 175h9.0M6.0 177h6.0M6.0 179h8.0M6.0 181h12.0M6.0 183h4.0M6.0 185h3.0M6.0 187h5.0M6.0 189h7.0M6.0 191h8.0M6.0 193h11.0M22.0 197h2.0M22.0 201h2.0M22.0 213h2.0M22.0 215h8.0M37.0 215h3.0M49.0 215h3.0M22.0 217h8.0M37.0 217h2.0M48.0 217h3.0M11.0 223h52.0M12.0 225h12.0M11.0 229h37.0M11.0 231h43.0M22.0 233h8.0M37.0 233h18.0M64.0 233h3.0M22.0 235h8.0M37.0 235h10.0M56.0 235h3.0M22.0 237h8.0M37.0 237h8.0M54.0 237h3.0M22.0 239h8.0M37.0 239h43.0M89.0 239h3.0M11.0 241h39.0M22.0 245h8.0M37.0 245h46.0M92.0 245h3.0M11.0 247h39.0M22.0 251h8.0M37.0 251h13.0M59.0 251h3.0M22.0 253h8.0M37.0 253h8.0M54.0 253h3.0M22.0 255h8.0M37.0 255h8.0M54.0 255h3.0M22.0 257h8.0M37.0 257h8.0M54.0 257h3.0M22.0 261h8.0M37.0 261h36.0M82.0 261h3.0M11.0 263h34.0M22.0 267h8.0M37.0 267h50.0M96.0 267h3.0M11.0 269h49.0M12.0 271h50.0M22.0 275h8.0M37.0 275h15.0M61.0 275h3.0M22.0 277h8.0M37.0 277h10.0M56.0 277h3.0M22.0 279h8.0M37.0 279h10.0M56.0 279h3.0M22.0 281h8.0M37.0 281h10.0M56.0 281h3.0M22.0 285h8.0M37.0 285h50.0M96.0 285h3.0M11.0 287h34.0M22.0 291h8.0M37.0 291h13.0M59.0 291h3.0M22.0 293h8.0M37.0 293h7.0M53.0 293h3.0M22.0 295h8.0M37.0 295h7.0M53.0 295h3.0M22.0 297h8.0M37.0 297h7.0M53.0 297h3.0M12.0 303h5.0M11.0 305h44.0M12.0 307h8.0M11.0 311h34.0M22.0 315h8.0M37.0 315h13.0M59.0 315h3.0M22.0 317h8.0M37.0 317h10.0M56.0 317h3.0M22.0 319h8.0M37.0 319h10.0M56.0 319h3.0M22.0 321h8.0M37.0 321h10.0M56.0 321h3.0M12.0 327h5.0M11.0 329h55.0M11.0 331h17.0M11.0 335h39.0M22.0 339h8.0M37.0 339h15.0M61.0 339h3.0M22.0 341h8.0M37.0 341h12.0M58.0 341h3.0M22.0 343h8.0M37.0 343h12.0M58.0 343h3.0M22.0 345h8.0M37.0 345h12.0M58.0 345h3.0M12.0 351h5.0M11.0 353h62.0M11.0 355h19.0M11.0 359h37.0M11.0 365h49.0M22.0 369h8.0M37.0 369h14.0M60.0 369h3.0M22.0 371h8.0M37.0 371h10.0M56.0 371h3.0M12.0 377h5.0M11.0 379h48.0M11.0 381h16.0M11.0 385h37.0M22.0 389h8.0M37.0 389h8.0M54.0 389h3.0M22.0 391h8.0M37.0 391h12.0M58.0 391h3.0M22.0 393h8.0M37.0 393h11.0M57.0 393h3.0M11.0 399h69.0M12.0 401h13.0M6.0 403h4.0M6.0 405h3.0M6.0 407h9.0M22.0 409h2.0M11.0 411h59.0M22.0 415h8.0M37.0 415h10.0M56.0 415h3.0M22.0 417h8.0M37.0 417h9.0M55.0 417h3.0M22.0 419h8.0M37.0 419h8.0M54.0 419h3.0M11.0 425h44.0M12.0 427h4.0M6.0 429h4.0M6.0 431h7.0M6.0 433h5.0M6.0 435h13.0M22.0 437h8.0M37.0 437h18.0M64.0 437h3.0M22.0 439h8.0M37.0 439h10.0M56.0 439h3.0M22.0 441h8.0M37.0 441h10.0M56.0 441h3.0M22.0 443h8.0M37.0 443h8.0M54.0 443h3.0M11.0 449h57.0M12.0 453h5.0M11.0 455h82.0M12.0 457h8.0M11.0 461h39.0M12.0 465h5.0M11.0 467h73.0M12.0 469h10.0M11.0 473h37.0M11.0 475h39.0M12.0 479h5.0M11.0 481h77.0M12.0 483h8.0M11.0 487h39.0M12.0 491h5.0M11.0 493h70.0M12.0 495h8.0M11.0 499h34.0M12.0 503h5.0M11.0 505h70.0M12.0 507h8.0M11.0 511h36.0M12.0 515h5.0M11.0 517h66.0M12.0 519h8.0M11.0 523h36.0M22.0 527h63.0M92.0 527h9.0M20.0 529h8.0M35.0 529h8.0M20.0 531h5.0M32.0 531h5.0M20.0 533h6.0M33.0 533h6.0M20.0 535h7.0M34.0 535h7.0M21.0 539h72.0M21.0 541h71.0M99.0 541h12.5M111.0 541h0.5M27.0 543h11.0M45.0 543h7.0M27.0 545h11.0M45.0 545h7.0M27.0 547h11.0M45.0 547h7.0M27.0 549h11.0M45.0 549h7.0M27.0 551h11.0M45.0 551h7.0M27.0 553h11.0M45.0 553h7.0M27.0 555h11.0M45.0 555h8.0M27.0 557h11.0M45.0 557h8.0M20.0 561h61.0M88.0 561h7.0M108.0 561h3.5M27.0 563h11.0M45.0 563h16.0M27.0 565h11.0M45.0 565h16.0M21.0 569h52.0M21.0 571h44.0M21.0 573h44.0M21.0 575h43.0M20.0 579h47.0M74.0 579h9.0M96.0 579h11.0M27.0 581h8.0M42.0 581h10.0M61.0 581h3.0M27.0 583h8.0M42.0 583h7.0M58.0 583h3.0M27.0 585h8.0M42.0 585h4.0M55.0 585h3.0M27.0 587h8.0M42.0 587h4.0M55.0 587h3.0M27.0 589h8.0M42.0 589h4.0M55.0 589h3.0M27.0 591h8.0M42.0 591h4.0M55.0 591h3.0M20.0 595h42.0M69.0 595h4.0M86.0 595h11.0M27.0 597h8.0M42.0 597h5.0M56.0 597h3.0M27.0 599h8.0M42.0 599h5.0M56.0 599h3.0M27.0 601h8.0M42.0 601h5.0M56.0 601h3.0M27.0 603h8.0M42.0 603h5.0M56.0 603h3.0M27.0 605h8.0M42.0 605h5.0M56.0 605h3.0M27.0 607h8.0M42.0 607h5.0M56.0 607h3.0M27.0 609h8.0M42.0 609h5.0M56.0 609h3.0M27.0 611h8.0M42.0 611h5.0M56.0 611h3.0M27.0 613h8.0M42.0 613h5.0M56.0 613h3.0M27.0 615h8.0M42.0 615h5.0M56.0 615h4.0M27.0 617h8.0M42.0 617h5.0M56.0 617h4.0M11.0 623h44.0M12.0 625h3.0M11.0 627h19.0M23.0 631h8.0M38.0 631h9.0M56.0 631h3.0M23.0 633h8.0M38.0 633h3.0M50.0 633h3.0M23.0 635h8.0M38.0 635h3.0M50.0 635h3.0M23.0 637h8.0M38.0 637h3.0M50.0 637h3.0M23.0 639h8.0M38.0 639h3.0M50.0 639h3.0M23.0 641h8.0M38.0 641h3.0M50.0 641h3.0M22.0 645h8.0M37.0 645h50.0M96.0 645h3.0M26.0 647h8.0M41.0 647h14.0M64.0 647h3.0M26.0 649h8.0M41.0 649h8.0M58.0 649h3.0M26.0 651h8.0M41.0 651h8.0M58.0 651h3.0M22.0 655h8.0M37.0 655h16.0M62.0 655h3.0M22.0 657h8.0M37.0 657h6.0M52.0 657h3.0M22.0 659h8.0M37.0 659h4.0M50.0 659h3.0M22.0 663h8.0M37.0 663h50.0M96.0 663h3.0M26.0 665h8.0M41.0 665h2.0M52.0 665h3.0M26.0 667h8.0M41.0 667h2.0M52.0 667h3.0M22.0 671h8.0M37.0 671h18.0M64.0 671h3.0M22.0 673h8.0M37.0 673h17.0M63.0 673h3.0M22.0 675h8.0M37.0 675h16.0M62.0 675h3.0M11.0 681h37.0M12.0 683h3.0M11.0 685h19.0M23.0 689h8.0M38.0 689h13.0M60.0 689h3.0M23.0 691h8.0M38.0 691h14.0M61.0 691h3.0M23.0 693h8.0M38.0 693h9.0M56.0 693h3.0M22.0 697h8.0M37.0 697h2.0M48.0 697h3.0M22.0 699h8.0M37.0 699h2.0M48.0 699h3.0M22.0 701h8.0M37.0 701h2.0M48.0 701h3.0M22.0 705h8.0M37.0 705h2.0M48.0 705h3.0M22.0 707h8.0M37.0 707h2.0M48.0 707h3.0M22.0 709h8.0M37.0 709h2.0M48.0 709h3.0M22.0 711h8.0M37.0 711h2.0M48.0 711h3.0M22.0 715h8.0M37.0 715h2.0M48.0 715h3.0M22.0 717h8.0M37.0 717h2.0M48.0 717h3.0M22.0 719h8.0M37.0 719h2.0M48.0 719h3.0M22.0 721h8.0M37.0 721h2.0M48.0 721h3.0M22.0 725h4.0M14.0 727h51.0" stroke="#ce9178" stroke-width="1.25" fill="none"/>
<path d="M6.0 203h49.0" stroke="#6a9955" stroke-width="1.25" fill="none"/>
<g opacity=".7">
<path d="M0.0 1h7.0M12.0 1h3.0M19.0 3h2.0M28.0 3h2.0M31.0 5h3.0M0.0 7h5.0M5.0 7h10.0M2.0 9h2.0M6.0 13h4.0M14.0 15h4.0M19.0 15h3.0M6.0 21h8.0M6.0 23h3.0M8.0 25h7.0M16.0 25h10.0M8.0 27h10.0M18.0 27h2.0M18.0 29h3.0M19.0 31h4.0M33.0 31h3.0M10.0 33h6.0M25.0 33h4.0M8.0 35h1.0M2.0 41h2.0M2.0 43h12.0M4.0 45h6.0M22.0 51h3.0M10.0 53h7.0M17.0 53h3.0M22.0 53h6.0M6.0 55h7.0M19.0 59h12.0M13.0 61h4.0M20.0 63h8.0M6.0 67h7.0M24.0 69h3.0M8.0 71h5.0M14.0 71h10.0M25.0 73h10.0M54.0 73h4.0M59.0 73h2.0M25.0 79h8.0M53.0 79h8.0M22.0 85h4.0M24.0 89h4.0M26.0 91h10.0M38.0 91h12.0M52.0 91h5.0M61.0 93h8.0M18.0 99h7.0M11.0 103h4.0M29.0 103h8.0M46.0 103h1.0M4.0 107h8.0M24.0 111h4.0M8.0 113h12.0M68.0 113h3.0M12.0 115h3.0M16.0 115h2.0M27.0 117h12.0M8.0 119h10.0M21.0 121h5.0M32.0 121h2.0M38.0 121h2.0M11.0 125h5.0M4.0 131h1.0M2.0 133h1.0M27.0 137h3.0M19.0 139h10.0M4.0 141h8.0M29.0 141h2.0M0.0 151h6.0M7.0 151h2.0" stroke="#d4d4d4" stroke-width="1.1" fill="none"/>
<path d="M8.0 1h2.0M0.0 3h2.0M3.0 3h2.0M6.0 3h8.0M15.0 3h3.0M21.0 3h5.0M32.0 3h8.0M0.0 5h2.0M10.0 5h12.0M24.0 5h6.0M5.0 9h4.0M6.0 19h2.0M20.0 21h1.0M27.0 25h3.0M10.0 29h7.0M37.0 31h8.0M17.0 33h7.0M6.0 37h1.0M4.0 51h8.0M13.0 51h8.0M26.0 51h4.0M31.0 51h1.0M6.0 53h4.0M14.0 55h6.0M27.0 57h4.0M6.0 59h12.0M32.0 59h12.0M46.0 59h2.0M6.0 61h6.0M18.0 61h3.0M6.0 63h7.0M29.0 63h5.0M16.0 69h7.0M13.0 73h3.0M36.0 73h7.0M10.0 77h1.0M11.0 79h4.0M17.0 79h4.0M21.0 79h3.0M37.0 79h6.0M9.0 81h2.0M8.0 83h2.0M27.0 85h2.0M6.0 87h7.0M8.0 89h12.0M21.0 89h3.0M9.0 93h10.0M21.0 93h10.0M52.0 93h8.0M8.0 99h5.0M6.0 103h4.0M38.0 103h7.0M14.0 107h4.0M10.0 109h3.0M14.0 109h5.0M15.0 111h8.0M21.0 113h7.0M32.0 113h8.0M41.0 113h2.0M43.0 113h6.0M51.0 113h5.0M60.0 113h7.0M9.0 115h2.0M19.0 115h6.0M23.0 117h2.0M19.0 119h3.0M23.0 119h5.0M34.0 121h3.0M8.0 123h3.0M12.0 123h5.0M8.0 127h1.0M6.0 129h1.0M6.0 135h12.0M4.0 137h5.0M4.0 139h4.0M30.0 139h4.0M14.0 141h4.0M20.0 141h2.0M24.0 141h5.0M36.0 141h11.0M4.0 143h12.0M14.0 145h1.0M2.0 147h1.0" stroke="#9cdcfe" stroke-width="1.1" fill="none"/>
<path d="M3.0 5h6.0M24.0 31h8.0M46.0 31h4.0M2.0 49h8.0M44.0 73h10.0M70.0 79h1.0M8.0 95h2.0M6.0 101h1.0M16.0 103h12.0M27.0 121h4.0M12.0 137h4.0M18.0 137h2.0M32.0 141h3.0" stroke="#ce9178" stroke-width="1.1" fill="none"/>
<path d="M4.0 11h7.0M13.0 31h5.0M14.0 63h5.0M13.0 67h2.0M16.0 73h8.0M10.0 75h4.0M8.0 85h10.0M19.0 85h2.0M8.0 91h2.0M24.0 91h2.0M14.0 99h3.0M6.0 109h3.0M8.0 111h6.0M29.0 113h2.0M26.0 115h10.0M10.0 139h8.0M4.0 145h10.0M0.0 149h2.0" stroke="#c586c0" stroke-width="1.1" fill="none"/>
<path d="M6.0 15h7.0M6.0 17h5.0M21.0 27h2.0M4.0 39h1.0M17.0 57h10.0M16.0 67h3.0M34.0 79h2.0M44.0 79h7.0M32.0 93h12.0M16.0 117h4.0M21.0 117h2.0M8.0 121h12.0M20.0 125h4.0M25.0 125h2.0M9.0 137h3.0M20.0 137h6.0M17.0 143h7.0" stroke="#569cd6" stroke-width="1.1" fill="none"/>
<path d="M23.0 15h4.0M15.0 21h4.0M10.0 31h3.0M2.0 47h1.0M6.0 57h10.0M32.0 57h5.0M8.0 69h7.0M10.0 73h2.0M61.0 79h7.0M10.0 91h12.0M46.0 93h5.0M26.0 99h3.0M4.0 105h1.0M57.0 113h3.0M8.0 117h6.0M17.0 125h2.0M2.0 135h3.0" stroke="#dcdcaa" stroke-width="1.1" fill="none"/>
</g></svg>
<div style="position:absolute;left:1418.5px;top:610.0px;width:112px;height:2px;background:#264f78;opacity:.6"></div>
<div style="position:absolute;left:1412.0px;top:234.0px;width:2px;height:2.0px;background:#1b809c"></div>
<div style="position:absolute;left:1412.0px;top:236.0px;width:2px;height:2.0px;background:#1b809c"></div>
<div style="position:absolute;left:1412.0px;top:246.0px;width:2px;height:2.0px;background:#1b809c"></div>
<div style="position:absolute;left:1412.0px;top:252.0px;width:2px;height:2.0px;background:#1b809c"></div>
<div style="position:absolute;left:1412.0px;top:268.0px;width:2px;height:2.0px;background:#1b809c"></div>
<div style="position:absolute;left:1412.0px;top:274.0px;width:2px;height:2.0px;background:#1b809c"></div>
<div style="position:absolute;left:1412.0px;top:282.0px;width:2px;height:2.0px;background:#1b809c"></div>
<div style="position:absolute;left:1412.0px;top:292.0px;width:2px;height:2.0px;background:#1b809c"></div>
<div style="position:absolute;left:1412.0px;top:538.0px;width:2px;height:20.0px;background:#1b809c"></div>
<div style="position:absolute;left:1412.0px;top:560.0px;width:2px;height:6.0px;background:#1b809c"></div>
<div style="position:absolute;left:1412.0px;top:568.0px;width:2px;height:2.0px;background:#1b809c"></div>
<div style="position:absolute;left:1412.0px;top:578.0px;width:2px;height:14.0px;background:#1b809c"></div>
<div style="position:absolute;left:1412.0px;top:594.0px;width:2px;height:24.0px;background:#1b809c"></div>
<div style="position:absolute;left:1530px;top:0;width:1px;height:884px;background:#303031"></div>
<div style="position:absolute;left:1531px;top:255.3px;width:5.5px;height:6.0px;background:#1b809c;opacity:.6"></div>
<div style="position:absolute;left:1531px;top:266.2px;width:5.5px;height:6.0px;background:#1b809c;opacity:.6"></div>
<div style="position:absolute;left:1531px;top:272.8px;width:5.5px;height:6.0px;background:#1b809c;opacity:.6"></div>
<div style="position:absolute;left:1531px;top:290.2px;width:5.5px;height:6.0px;background:#1b809c;opacity:.6"></div>
<div style="position:absolute;left:1531px;top:296.8px;width:5.5px;height:6.0px;background:#1b809c;opacity:.6"></div>
<div style="position:absolute;left:1531px;top:305.5px;width:5.5px;height:6.0px;background:#1b809c;opacity:.6"></div>
<div style="position:absolute;left:1531px;top:316.4px;width:5.5px;height:6.0px;background:#1b809c;opacity:.6"></div>
<div style="position:absolute;left:1531px;top:586.4px;width:5.5px;height:21.8px;background:#1b809c;opacity:.6"></div>
<div style="position:absolute;left:1531px;top:610.4px;width:5.5px;height:6.5px;background:#1b809c;opacity:.6"></div>
<div style="position:absolute;left:1531px;top:617.2px;width:5.5px;height:6.0px;background:#1b809c;opacity:.6"></div>
<div style="position:absolute;left:1531px;top:630.0px;width:5.5px;height:15.3px;background:#1b809c;opacity:.6"></div>
<div style="position:absolute;left:1531px;top:647.5px;width:5.5px;height:26.2px;background:#1b809c;opacity:.6"></div>
<div style="position:absolute;left:1531px;top:662.8px;width:16px;height:2.5px;background:#a0a0a0;opacity:.75"></div>
<div style="position:absolute;left:1530px;top:581.2px;width:17px;height:82.5px;background:rgba(121,121,121,.4)"></div>
<div style="position:absolute;left:0;top:0;width:1410px;height:4px;background:linear-gradient(rgba(0,0,0,.75) 0,rgba(0,0,0,.3) 50%,rgba(0,0,0,0) 100%)"></div>
<div style="position:absolute;left:85px;top:868.25px;width:1302px;height:15px;background:rgba(121,121,121,.4)"></div>
</div>
<div id="status"><div id="remote"></div><svg style="left:12.20px;top:4.70px" width="17.50" height="17.50" viewBox="0 0 16 16" ><path d="M12.904 9.57L8.928 5.596l3.976-3.976-.619-.62L8 5.286v.619l4.285 4.285.619-.62zM3 5.62l4 3.976-4 4.004.619.619L8 9.905v-.619L3.619 5 3 5.62z" fill="#fff" fill-rule="evenodd" stroke="#fff" stroke-width="0.25"/></svg>
<svg style="left:52.30px;top:4.70px" width="17.50" height="17.50" viewBox="0 0 24 24" ><path d="M21.007 8.222A3.738 3.738 0 0 0 15.045 5.2a3.737 3.737 0 0 0 1.156 6.583 2.988 2.988 0 0 1-2.668 1.67h-2.99a4.456 4.456 0 0 0-2.989 1.165V7.4a3.737 3.737 0 1 0-1.494 0v9.117a3.776 3.776 0 1 0 1.816.099 2.99 2.99 0 0 1 2.668-1.667h2.99a4.484 4.484 0 0 0 4.223-3.039 3.736 3.736 0 0 0 3.25-3.687zM4.565 3.738a2.242 2.242 0 1 1 4.484 0 2.242 2.242 0 0 1-4.484 0zm4.484 16.441a2.242 2.242 0 1 1-4.484 0 2.242 2.242 0 0 1 4.484 0zm8.221-9.715a2.242 2.242 0 1 1 0-4.485 2.242 2.242 0 0 1 0 4.485z" fill="#fff" stroke="#fff" stroke-width=".4"/></svg>
<svg style="left:133.80px;top:4.70px" width="17.50" height="17.50" viewBox="0 0 16 16" ><path d="M2.006 8.267L.78 9.5 0 8.73l2.09-2.07.76.01 2.09 2.12-.76.76-1.167-1.18a5 5 0 0 0 9.4 1.983l.813.597a6 6 0 0 1-11.22-2.683zm10.990-.466L11.760 6.550l-.760.760 2.090 2.110.760.010 2.090-2.070-.750-.760-1.194 1.180a6 6 0 0 0-11.110-2.920l.810.594a5 5 0 0 1 9.300 2.346z" fill="#fff" fill-rule="evenodd" stroke="#fff" stroke-width="0.25"/></svg>
<svg style="left:171.00px;top:4.70px" width="17.50" height="17.50" viewBox="0 0 16 16" ><path d="M8.600 1c1.600.100 3.100.900 4.200 2 1.300 1.400 2 3.100 2 5.100 0 1.600-.600 3.100-1.600 4.400-1 1.200-2.400 2.100-4 2.400-1.600.300-3.200.100-4.600-.700-1.400-.800-2.500-2-3.100-3.500C.900 9.200.800 7.500 1.300 6c.500-1.600 1.400-2.900 2.800-3.800C5.400 1.300 7 .900 8.600 1zm.500 12.900c1.300-.300 2.500-1 3.400-2.100.800-1.100 1.300-2.400 1.200-3.800 0-1.600-.600-3.200-1.700-4.300-1-1-2.200-1.600-3.600-1.700-1.300-.100-2.700.200-3.800 1-1.100.800-1.900 1.900-2.300 3.300-.400 1.300-.400 2.700.200 4 .600 1.300 1.500 2.300 2.700 3 1.200.700 2.600.900 3.900.600zM7.900 7.500L10.300 5l.700.700-2.400 2.500 2.400 2.500-.700.700-2.400-2.500-2.400 2.500-.700-.700 2.400-2.500-2.400-2.500.700-.700 2.400 2.500z" fill="#fff" fill-rule="evenodd" stroke="#fff" stroke-width="0.2"/></svg>
<svg style="left:204.70px;top:4.70px" width="17.50" height="17.50" viewBox="0 0 16 16" ><path d="M7.560 1h.880l6.540 12.260-.440.740H1.440L1 13.260 7.560 1zM8 2.280L2.280 13H13.700L8 2.280zM8.625 12v-1h-1.250v1h1.250zm-1.250-2V6h1.250v4h-1.250z" fill="#fff" fill-rule="evenodd" stroke="#fff" stroke-width="0.2"/></svg>
<svg style="left:258.80px;top:5.10px" width="9.50" height="17.00" viewBox="0 0 9.5 17" ><circle cx="4.75" cy="2.800" r="2" fill="none" stroke="#fff" stroke-width="1.400"/><path d="M2.300 15.800V9.600L.900 8.300V6.300h7.700v2L7.200 9.600v6.200z" fill="none" stroke="#fff" stroke-width="1.400" stroke-linejoin="round"/></svg>
<svg style="left:369.50px;top:6.00px" width="15.00" height="16.00" viewBox="0 0 15 16" ><path d="M3.300 7V4.600a3.300 3.300 0 0 1 6.600 0V7" fill="none" stroke="#a7b7c4" stroke-width="1.800"/><path d="M11.500 5.500l2.800-2 .500 1-1.300 2.300z" fill="#b0b0b0"/><rect x=".400" y="6.100" width="11.500" height="9.200" rx="1.200" fill="#f4b72f"/><rect x="5.400" y="8.600" width="1.600" height="4" rx=".800" fill="#4a3a1a"/></svg>
<svg style="left:406.90px;top:4.70px" width="17.50" height="17.50" viewBox="0 0 24 24" ><path d="M13.735 1.694L15.178 1l8.029 6.328v1.388l-8.029 6.072-1.443-.694v-2.776h-.59c-4.06-.02-6.71.104-10.61 5.163l-1.534-.493a8.23 8.23 0 0 1 .271-2.255 11.026 11.026 0 0 1 3.92-6.793 11.339 11.339 0 0 1 7.502-2.547h1.040v-2.700zm1.804 7.917v2.776l5.676-4.281-5.648-4.545v2.664h-2.860A9.299 9.299 0 0 0 5.770 8.848a10.444 10.444 0 0 0-2.401 4.122c3.351-3.213 6.190-3.359 9.798-3.359h2.372zm-7.647 5.896a4.310 4.310 0 1 1 4.788 7.166 4.310 4.310 0 0 1-4.788-7.166zm.955 5.728a2.588 2.588 0 1 0 2.878-4.302 2.588 2.588 0 0 0-2.878 4.302z" fill="#fff" stroke="#fff" stroke-width=".4"/></svg>
<svg style="left:1253.50px;top:5.00px" width="9.00" height="17.00" viewBox="0 0 9 17" ><circle cx="4.500" cy="8.500" r="3.200" fill="none" stroke="#fff" stroke-width="1.500"/><path d="M4.500 0v5.300M4.500 11.700V17" stroke="#fff" stroke-width="1.500"/></svg>
<svg style="left:1756.50px;top:4.70px" width="17.50" height="17.50" viewBox="0 0 16 16" ><path d="M15.620 3.596L7.815 12.810l-.728-.033L4 8.382l.754-.530 2.744 3.907L14.917 3l.703.596zM7.234 8.774l4.386-5.178L10.917 3l-4.230 4.994.547.780zm-1.550.403l.548.780-.547-.780zm-1.617 1.910l.547.780-.799.943-.728-.033L0 8.382l.754-.530 2.744 3.907.570-.672z" fill="#fff" fill-rule="evenodd" stroke="#fff" stroke-width="0.2"/></svg>
<svg style="left:1847.50px;top:4.70px" width="17.50" height="17.50" viewBox="0 0 16 16" ><path d="M6 1h8.500l.500.500v8l-.500.500H12v2.500l-.850.350L8.290 10H8V9h.500l.350.150L11 11.290V9.500l.500-.500H14V2H7v1H6V1.500l.500-.500zM4.500 5a2.500 2.500 0 1 0 0 5 2.500 2.500 0 0 0 0-5zM3 7.500a1.500 1.500 0 1 1 3 0 1.500 1.500 0 0 1-3 0zM1 14v-1a2 2 0 0 1 2-2h3a2 2 0 0 1 2 2v1h1v-1a3 3 0 0 0-3-3H3a3 3 0 0 0-3 3v1h1z" fill="#fff" fill-rule="evenodd" stroke="#fff" stroke-width="0.15"/></svg>
<svg style="left:1883.80px;top:4.70px" width="17.50" height="17.50" viewBox="0 0 16 16" ><path d="M13.377 10.573a7.630 7.630 0 0 1-.383-2.380V6.195a5.115 5.115 0 0 0-1.268-3.446 5.138 5.138 0 0 0-3.242-1.722c-.694-.072-1.400 0-2.070.227-.670.215-1.280.574-1.794 1.053a4.923 4.923 0 0 0-1.208 1.675 5.067 5.067 0 0 0-.431 2.022v2.200a7.610 7.610 0 0 1-.383 2.370L2 12.343l.479.658h3.505c0 .526.215 1.040.586 1.412.370.370.885.586 1.412.586.526 0 1.040-.215 1.411-.586s.587-.886.587-1.412h3.505l.478-.658-.586-1.770zm-4.690 3.147a.997.997 0 0 1-.705.299.997.997 0 0 1-.706-.300.997.997 0 0 1-.300-.705h1.999a.939.939 0 0 1-.287.706zm-5.515-1.710l.371-1.114a8.633 8.633 0 0 0 .443-2.691V6.004c0-.563.120-1.113.347-1.616.227-.514.550-.969.969-1.340.419-.382.910-.670 1.436-.837.538-.180 1.100-.240 1.650-.180a4.147 4.147 0 0 1 2.597 1.400 4.133 4.133 0 0 1 1.004 2.776v2.010c0 .909.144 1.818.443 2.691l.371 1.113h-9.630v-.012z" fill="#fff" fill-rule="evenodd" stroke="#fff" stroke-width="0.15"/></svg></div>
<span class="tx" style="left:53.87px;top:11.66px;font-size:15.4px;color:#ccc;transform:scaleX(0.9292)">File</span>
<span class="tx" style="left:97.27px;top:11.66px;font-size:15.4px;color:#ccc;transform:scaleX(1.0269)">Edit</span>
<span class="tx" style="left:144.66px;top:11.66px;font-size:15.4px;color:#ccc;transform:scaleX(1.0371)">Selection</span>
<span class="tx" style="left:230.70px;top:11.66px;font-size:15.4px;color:#ccc;transform:scaleX(0.9882)">View</span>
<span class="tx" style="left:285.00px;top:11.66px;font-size:15.4px;color:#ccc;transform:scaleX(1.0000)">Go</span>
<span class="tx" style="left:324.99px;top:11.66px;font-size:15.4px;color:#ccc;transform:scaleX(1.0111)">Run</span>
<span class="tx" style="left:374.00px;top:11.66px;font-size:15.4px;color:#ccc;transform:scaleX(1.0345)">Terminal</span>
<span class="tx" style="left:453.20px;top:11.66px;font-size:15.4px;color:#ccc;transform:scaleX(1.1000)">Help</span>
<span class="tx" style="left:810.73px;top:11.02px;font-size:15.1px;color:#ccc;transform:scaleX(0.9725)">Ncd.vue - gPHC-Kyushu - Visual Studio Code</span>
<span class="tx" style="left:84.86px;top:53.10px;font-size:13px;color:#bbb;transform:scaleX(0.9403)">MEDBLOCKS UI: TEMPLATES</span>
<span class="tx" style="left:129.99px;top:87.66px;font-size:15.4px;color:#fff;transform:scaleX(1.0087)">NCD-Triage</span>
<span class="tx" style="left:219.30px;top:88.85px;font-size:14px;color:#b5c8d4;transform:scaleX(1.0770)">composition</span>
<span class="tx" style="left:413.30px;top:52.76px;font-size:15.4px;color:#e2c08d;font-style:italic;transform:scaleX(0.9804)">Ncd.vue</span>
<span class="tx" style="left:475.70px;top:52.95px;font-size:14px;color:#b39c76;font-style:italic;-webkit-text-stroke:.4px #b39c76;transform:scaleX(0.9833)">M</span>
<span class="tx" style="left:392.50px;top:87.36px;font-size:15.4px;color:#a9a9a9;transform:scaleX(0.9650)">src</span>
<span class="tx" style="left:433.00px;top:87.36px;font-size:15.4px;color:#a9a9a9;transform:scaleX(1.0512)">components</span>
<span class="tx" style="left:569.47px;top:87.36px;font-size:15.4px;color:#a9a9a9;transform:scaleX(1.0327)">Ncd.vue</span>
<span class="tx" style="left:672.00px;top:87.36px;font-size:15.4px;color:#a9a9a9;transform:scaleX(1.0418)">"Ncd.vue"</span>
<span class="tx" style="left:787.00px;top:87.36px;font-size:15.4px;color:#a9a9a9;transform:scaleX(1.0664)">template.bg-gray-300</span>
<span class="tx" style="left:986.24px;top:87.36px;font-size:15.4px;color:#a9a9a9;transform:scaleX(1.0638)">mb-form..border.shadow-2xl.p-5.rounded-xl.text-xl.font-bold.flex.flex-col.gap-3.mx-2.my-10.md:p-10.sm:mx-28.bg-gray-100.</span>
<span class="tx" style="left:73.43px;top:999.96px;font-size:14.7px;color:#fff;transform:scaleX(1.0694)">main*</span>
<span class="tx" style="left:193.00px;top:999.96px;font-size:14.7px;color:#fff;transform:scaleX(0.8750)">0</span>
<span class="tx" style="left:226.80px;top:999.96px;font-size:14.7px;color:#fff;transform:scaleX(0.8750)">0</span>
<span class="tx" style="left:276.30px;top:999.96px;font-size:14.7px;color:#fff;transform:scaleX(0.9473)">ATHULKNAIR</span>
<span class="tx" style="left:428.53px;top:999.96px;font-size:14.7px;color:#fff;transform:scaleX(0.9667)">Live Share</span>
<span class="tx" style="left:1270.50px;top:999.96px;font-size:14.7px;color:#fff;transform:scaleX(0.9828)">You, seconds ago</span>
<span class="tx" style="left:1404.02px;top:999.96px;font-size:14.7px;color:#fff;transform:scaleX(0.9840)">Ln 306, Col 73</span>
<span class="tx" style="left:1517.35px;top:999.96px;font-size:14.7px;color:#fff;transform:scaleX(0.9453)">Spaces: 2</span>
<span class="tx" style="left:1598.53px;top:999.96px;font-size:14.7px;color:#fff;transform:scaleX(0.9700)">UTF-8</span>
<span class="tx" style="left:1658.80px;top:999.96px;font-size:14.7px;color:#fff;transform:scaleX(0.8526)">CRLF</span>
<span class="tx" style="left:1711.30px;top:999.96px;font-size:14.7px;color:#fff;transform:scaleX(0.9880)">Vue</span>
<span class="tx" style="left:1777.80px;top:999.96px;font-size:14.7px;color:#fff;transform:scaleX(1.0043)">Prettier</span>
<div class="box"></div>
</body></html>
